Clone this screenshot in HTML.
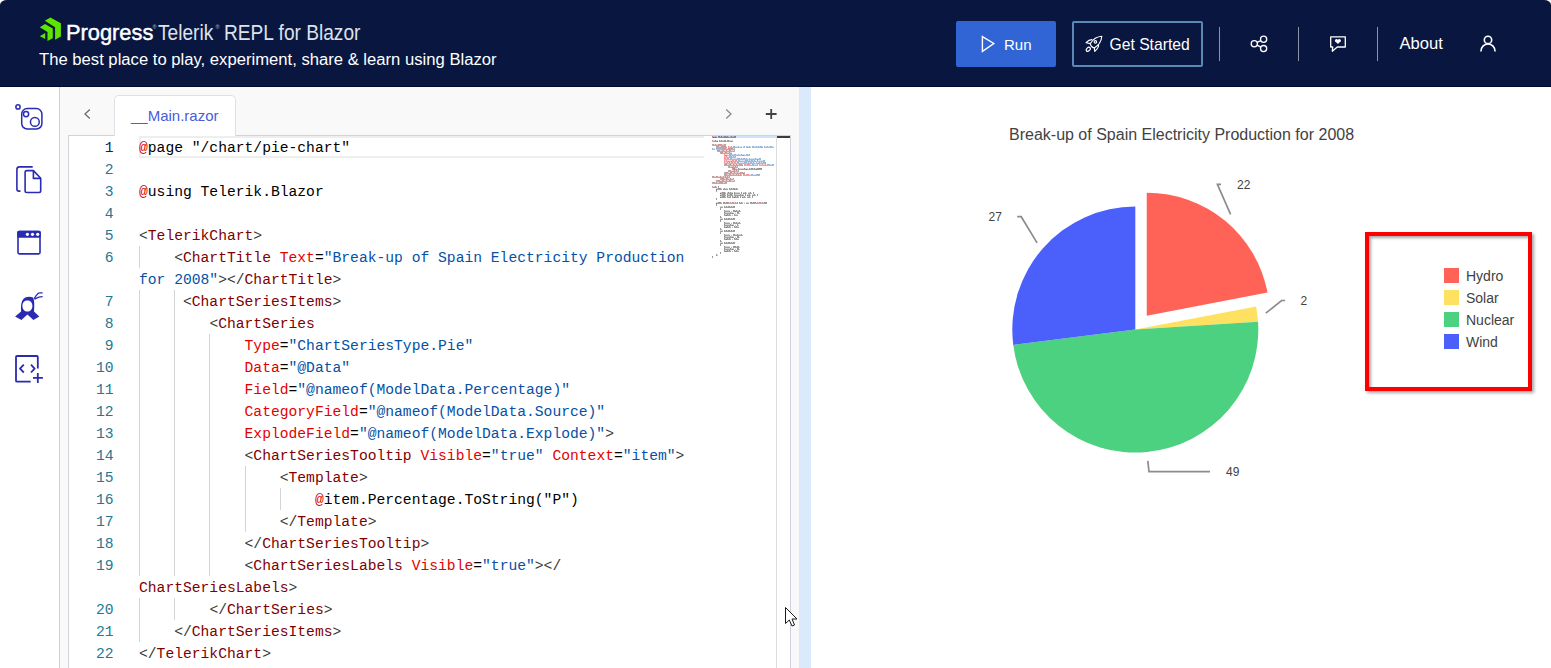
<!DOCTYPE html>
<html><head><meta charset="utf-8">
<style>
*{box-sizing:border-box}
html,body{margin:0;padding:0}
body{width:1551px;height:668px;overflow:hidden;position:relative;background:#fff;font-family:"Liberation Sans",sans-serif}
.abs{position:absolute}
#hdr{position:absolute;left:0;top:0;width:1551px;height:87px;background:#081640;border-radius:7px 7px 0 0 / 5px 5px 0 0;border-bottom:1px solid #000832}
.w{position:absolute;white-space:nowrap;color:#fff;line-height:1}
.btn{position:absolute;top:21px;height:46px;border-radius:2px}
.sep{position:absolute;top:27px;width:1px;height:34px;background:#8b93a6}
#side{position:absolute;left:0;top:87px;width:60px;height:581px;background:#fff;border-right:1px solid #c9d1dc}
#ed{position:absolute;left:60px;top:87px;width:739px;height:581px;background:#f9f9f9}
#split{position:absolute;left:799px;top:87px;width:12px;height:581px;background:#dbe9fc}
#box{position:absolute;left:68px;top:135px;width:723px;height:540px;background:#fff;border:1px solid #cfd4da}
.ln{position:absolute;left:70px;width:43.6px;text-align:right;font-family:"Liberation Mono",monospace;font-size:14.67px;line-height:22px;height:22px;color:#237893;padding-top:1px}
.ln.cur{color:#0b216f}
.cl{position:absolute;left:139px;white-space:pre;font-family:"Liberation Mono",monospace;font-size:14.67px;line-height:22px;height:22px;padding-top:1px}
.a{color:#e00000}.t{color:#800000}.d{color:#383838}.n{color:#e50000}.v{color:#0451a5}.p{color:#000}
.gd{position:absolute;width:1px;height:22px;background:#d3d3d3}
#tab{position:absolute;left:114px;top:95px;width:122px;height:41px;background:#fff;border:1px solid #dee2e6;border-bottom:none;border-radius:5px 5px 0 0}
</style></head><body>

<div id="hdr">
  <!-- Progress logo -->
  <svg class="abs" style="left:36px;top:14px" width="30" height="30" viewBox="0 0 30 30">
    <polygon fill="#5ce500" points="8.8,6.7 14.4,3.4 24.9,9.2 24.9,22.5 19.1,25.8 19.1,13.2"/>
    <polygon fill="#5ce500" points="3.8,13.3 9,10.1 16.8,14.6 16.8,24.2 11.5,26.9 11.5,17.9"/>
    <polygon fill="#5ce500" points="3.8,22.2 9.2,18.9 9.2,24.9"/>
  </svg>
  <div class="w" style="left:65.6px;top:21.6px;font-size:22.5px;-webkit-text-stroke:0.45px #fff;transform:scaleX(0.97);transform-origin:0 0">Progress</div>
  <div class="w" style="left:152.5px;top:25px;font-size:5.5px;color:#b9bfcc">&#174;</div>
  <div class="w" style="left:158px;top:21px;font-size:22.5px;color:#dfe2ea;transform:scaleX(0.85) translateY(1px);transform-origin:0 0">Telerik</div>
  <div class="w" style="left:215.5px;top:25px;font-size:5.5px;color:#b9bfcc">&#174;</div>
  <div class="w" style="left:224px;top:21px;font-size:22.5px;color:#dfe2ea;transform:scaleX(0.85) translateY(1px);transform-origin:0 0">REPL for Blazor</div>
  <div class="w" style="left:39px;top:51.5px;font-size:16.65px;color:#fff">The best place to play, experiment, share &amp; learn using Blazor</div>

  <!-- Run -->
  <div class="btn" style="left:956px;width:100px;background:#3165d6"></div>
  <svg class="abs" style="left:970px;top:25px" width="40" height="40" viewBox="0 0 40 40">
    <path d="M12.4,11.6 L23.8,18.5 L12.4,26.3 Z" fill="none" stroke="#fff" stroke-width="1.4" stroke-linejoin="miter"/>
  </svg>
  <div class="w" style="left:1004px;top:37px;font-size:15px">Run</div>

  <!-- Get started -->
  <div class="btn" style="left:1072px;width:131px;border:2px solid #5a87b6"></div>
  <svg class="abs" style="left:1082px;top:32px" width="24" height="24" viewBox="0 0 24 24" fill="none" stroke="#fff" stroke-width="1.15" stroke-linejoin="round">
    <path d="M19.8,4.3 C14.5,4.6 10.5,8 8.3,11.6 C8.6,13.4 10.4,15.5 12.3,15.9 C15.8,13.8 19.4,10 19.8,4.3 Z"/>
    <circle cx="13.4" cy="9.9" r="1.25"/>
    <path d="M10.4,7.6 C8.3,7.4 6,8.6 4.1,10.7 L8.3,11.6"/>
    <path d="M16.6,12.4 C16.8,14.5 15.6,17 12.8,19.4 L12.3,15.9"/>
    <ellipse cx="6.3" cy="17.3" rx="1.6" ry="2.4" transform="rotate(45 6.3 17.3)"/>
  </svg>
  <div class="w" style="left:1109.5px;top:37px;font-size:15.7px">Get Started</div>

  <div class="sep" style="left:1219px"></div>
  <!-- share -->
  <svg class="abs" style="left:1240px;top:25px" width="40" height="40" viewBox="0 0 40 40">
    <circle cx="14.3" cy="18.8" r="3.1" fill="none" stroke="#fff" stroke-width="1.3"/>
    <circle cx="23.6" cy="14.3" r="3.1" fill="none" stroke="#fff" stroke-width="1.3"/>
    <circle cx="23.6" cy="23.6" r="3.1" fill="none" stroke="#fff" stroke-width="1.3"/>
    <path d="M17,17.4 L20.9,15.6 M17,20.2 L20.9,22.2" stroke="#fff" stroke-width="1.3"/>
  </svg>
  <div class="sep" style="left:1298px"></div>
  <!-- chat -->
  <svg class="abs" style="left:1320px;top:25px" width="40" height="40" viewBox="0 0 40 40">
    <path d="M10.7,11.8 L25.3,11.8 L25.3,22 L17.3,22 L12.3,26.2 L12.7,22 L10.7,22 Z" fill="none" stroke="#fff" stroke-width="1.3" stroke-linejoin="round"/>
    <circle cx="16.5" cy="15.6" r="1.55" fill="#fff"/><circle cx="19.3" cy="15.6" r="1.55" fill="#fff"/><path d="M15,16 L20.8,16 L17.9,19.1 Z" fill="#fff"/>
  </svg>
  <div class="sep" style="left:1377px"></div>
  <div class="w" style="left:1399.5px;top:35.5px;font-size:16.6px">About</div>
  <!-- user -->
  <svg class="abs" style="left:1470px;top:25px" width="40" height="40" viewBox="0 0 40 40">
    <circle cx="18" cy="14.9" r="3.7" fill="none" stroke="#fff" stroke-width="1.6"/>
    <path d="M10.9,26.6 C10.9,22 14,19 18,19 C22,19 25.1,22 25.1,26.6" fill="none" stroke="#fff" stroke-width="1.6"/>
  </svg>
</div>

<div id="side">
  <svg class="abs" style="left:10px;top:11px" width="40" height="40" viewBox="0 0 40 40" fill="none" stroke="#2a2bb3" stroke-width="1.5">
    <circle cx="8" cy="8.9" r="2.1"/>
    <rect x="11.7" y="10.6" width="20.2" height="20.4" rx="5.5"/>
    <circle cx="16.05" cy="16.05" r="2.6"/>
    <circle cx="24.85" cy="23.95" r="4.4"/>
  </svg>
  <svg class="abs" style="left:10px;top:73px" width="40" height="40" viewBox="0 0 40 40" fill="none" stroke="#2a2bb3" stroke-width="1.6" stroke-linejoin="round">
    <path d="M22.7,6.9 L9.5,6.9 Q6.9,6.9 6.9,9.5 L6.9,29 Q6.9,31.1 9,31.1 L10.5,31.1"/>
    <path d="M23.4,10.6 L16.8,10.6 Q15.1,10.6 15.1,12.3 L15.1,30.8 Q15.1,32.5 16.8,32.5 L29,32.5 Q30.7,32.5 30.7,30.8 L30.7,18.2 Z"/>
    <path d="M23.4,10.6 L23.4,18.4 L30.7,18.4"/>
  </svg>
  <svg class="abs" style="left:10px;top:136px" width="40" height="40" viewBox="0 0 40 40">
    <rect x="8" y="8.6" width="22" height="22.3" rx="1.3" fill="none" stroke="#2a2bb3" stroke-width="1.6"/>
    <rect x="7.2" y="7.8" width="23.6" height="6.9" rx="1.5" fill="#2a2bb3"/>
    <circle cx="17.4" cy="11.3" r="1.6" fill="#fff"/>
    <circle cx="22.5" cy="11.3" r="1.6" fill="#fff"/>
    <circle cx="27.7" cy="11.3" r="1.6" fill="#fff"/>
  </svg>
  <svg class="abs" style="left:10px;top:200px" width="40" height="40" viewBox="0 0 40 40">
    <path fill="#2a2bb3" fill-rule="evenodd" d="M11.1,24.5 C10.6,19 11.2,14.5 13.5,11.8 C15.5,9.6 20,9 23,10.5 C24.5,12.5 24.5,19 24,24.5 L29.3,29.4 L23.4,33 L17.4,27.6 L11.4,33 L5.1,29.4 Z M17.4,13.4 C14.7,13.4 12.4,15.2 12.4,18.9 C12.4,22.4 14.7,24.5 17.4,24.5 C20.1,24.5 22.4,22.4 22.4,18.9 C22.4,15.2 20.1,13.4 17.4,13.4 Z"/>
    <path d="M24,11.6 C26.5,9 27,5.8 29.5,5.8 L32.6,5.8 M24.5,12.2 C27.5,10.5 29,9.5 32.6,9.6" fill="none" stroke="#2a2bb3" stroke-width="1.2"/>
  </svg>
  <svg class="abs" style="left:10px;top:263px" width="40" height="40" viewBox="0 0 40 40" fill="none" stroke="#2a2bb3" stroke-width="1.8">
    <path d="M20.7,31.7 L7,31.7 Q6,31.7 6,30.7 L6,7 Q6,6 7,6 L26.8,6 Q27.8,6 27.8,7 L27.8,18.6"/>
    <path d="M13.8,14.7 L10,18.6 L13.8,22.5 M21,14.7 L24.6,18.6 L21,22.5" stroke-linejoin="round"/>
    <path d="M27.8,23 L27.8,32.9 M23,27.8 L32.9,27.8"/>
  </svg>
</div>

<div id="ed"></div>
<div id="box"></div>
<div id="tab"></div>
<div class="w" style="left:131px;top:108px;font-size:15px;color:#4a5cd9">__Main.razor</div>
<svg class="abs" style="left:80px;top:105px" width="16" height="18" viewBox="0 0 16 18"><path d="M9.8,4.6 L5,9 L9.8,13.4" fill="none" stroke="#6c6c6c" stroke-width="1.3"/></svg>
<svg class="abs" style="left:720px;top:105px" width="16" height="18" viewBox="0 0 16 18"><path d="M6.2,4.6 L11,9 L6.2,13.4" fill="none" stroke="#8a8a8a" stroke-width="1.3"/></svg>
<svg class="abs" style="left:762px;top:105px" width="18" height="18" viewBox="0 0 18 18"><path d="M9.2,3.9 L9.2,14 M3.8,9 L14.6,9" fill="none" stroke="#424242" stroke-width="1.8"/></svg>

<!-- current line highlight -->
<div class="abs" style="left:139px;top:136px;width:565px;height:22px;border:2px solid #eeeeee;border-right:none"></div>
<div class="gd" style="left:139px;top:246px"></div><div class="gd" style="left:139px;top:290px"></div><div class="gd" style="left:139px;top:312px"></div><div class="gd" style="left:139px;top:334px"></div><div class="gd" style="left:139px;top:356px"></div><div class="gd" style="left:139px;top:378px"></div><div class="gd" style="left:139px;top:400px"></div><div class="gd" style="left:139px;top:422px"></div><div class="gd" style="left:139px;top:444px"></div><div class="gd" style="left:139px;top:466px"></div><div class="gd" style="left:139px;top:488px"></div><div class="gd" style="left:139px;top:510px"></div><div class="gd" style="left:139px;top:532px"></div><div class="gd" style="left:139px;top:554px"></div><div class="gd" style="left:139px;top:598px"></div><div class="gd" style="left:139px;top:620px"></div><div class="gd" style="left:174px;top:290px"></div><div class="gd" style="left:174px;top:312px"></div><div class="gd" style="left:174px;top:334px"></div><div class="gd" style="left:174px;top:356px"></div><div class="gd" style="left:174px;top:378px"></div><div class="gd" style="left:174px;top:400px"></div><div class="gd" style="left:174px;top:422px"></div><div class="gd" style="left:174px;top:444px"></div><div class="gd" style="left:174px;top:466px"></div><div class="gd" style="left:174px;top:488px"></div><div class="gd" style="left:174px;top:510px"></div><div class="gd" style="left:174px;top:532px"></div><div class="gd" style="left:174px;top:554px"></div><div class="gd" style="left:174px;top:598px"></div><div class="gd" style="left:209px;top:334px"></div><div class="gd" style="left:209px;top:356px"></div><div class="gd" style="left:209px;top:378px"></div><div class="gd" style="left:209px;top:400px"></div><div class="gd" style="left:209px;top:422px"></div><div class="gd" style="left:209px;top:444px"></div><div class="gd" style="left:209px;top:466px"></div><div class="gd" style="left:209px;top:488px"></div><div class="gd" style="left:209px;top:510px"></div><div class="gd" style="left:209px;top:532px"></div><div class="gd" style="left:209px;top:554px"></div><div class="gd" style="left:245px;top:466px"></div><div class="gd" style="left:245px;top:488px"></div><div class="gd" style="left:245px;top:510px"></div><div class="gd" style="left:280px;top:488px"></div>
<div class="ln cur" style="top:136px">1</div>
<div class="cl" style="top:136px"><span class="a">@</span><span class="p">page &quot;/chart/pie-chart&quot;</span></div>
<div class="ln" style="top:158px">2</div>
<div class="cl" style="top:158px"></div>
<div class="ln" style="top:180px">3</div>
<div class="cl" style="top:180px"><span class="a">@</span><span class="p">using Telerik.Blazor</span></div>
<div class="ln" style="top:202px">4</div>
<div class="cl" style="top:202px"></div>
<div class="ln" style="top:224px">5</div>
<div class="cl" style="top:224px"><span class="d">&lt;</span><span class="t">TelerikChart</span><span class="d">&gt;</span></div>
<div class="ln" style="top:246px">6</div>
<div class="cl" style="top:246px"><span class="p">    </span><span class="d">&lt;</span><span class="t">ChartTitle</span><span class="p"> </span><span class="n">Text</span><span class="p">=</span><span class="v">&quot;Break-up of Spain Electricity Production</span></div>
<div class="cl" style="top:268px"><span class="v">for 2008&quot;</span><span class="d">&gt;&lt;/</span><span class="t">ChartTitle</span><span class="d">&gt;</span></div>
<div class="ln" style="top:290px">7</div>
<div class="cl" style="top:290px"><span class="p">     </span><span class="d">&lt;</span><span class="t">ChartSeriesItems</span><span class="d">&gt;</span></div>
<div class="ln" style="top:312px">8</div>
<div class="cl" style="top:312px"><span class="p">        </span><span class="d">&lt;</span><span class="t">ChartSeries</span></div>
<div class="ln" style="top:334px">9</div>
<div class="cl" style="top:334px"><span class="p">            </span><span class="n">Type</span><span class="p">=</span><span class="v">&quot;ChartSeriesType.Pie&quot;</span></div>
<div class="ln" style="top:356px">10</div>
<div class="cl" style="top:356px"><span class="p">            </span><span class="n">Data</span><span class="p">=</span><span class="v">&quot;@Data&quot;</span></div>
<div class="ln" style="top:378px">11</div>
<div class="cl" style="top:378px"><span class="p">            </span><span class="n">Field</span><span class="p">=</span><span class="v">&quot;@nameof(ModelData.Percentage)&quot;</span></div>
<div class="ln" style="top:400px">12</div>
<div class="cl" style="top:400px"><span class="p">            </span><span class="n">CategoryField</span><span class="p">=</span><span class="v">&quot;@nameof(ModelData.Source)&quot;</span></div>
<div class="ln" style="top:422px">13</div>
<div class="cl" style="top:422px"><span class="p">            </span><span class="n">ExplodeField</span><span class="p">=</span><span class="v">&quot;@nameof(ModelData.Explode)&quot;</span><span class="d">&gt;</span></div>
<div class="ln" style="top:444px">14</div>
<div class="cl" style="top:444px"><span class="p">            </span><span class="d">&lt;</span><span class="t">ChartSeriesTooltip</span><span class="p"> </span><span class="n">Visible</span><span class="p">=</span><span class="v">&quot;true&quot;</span><span class="p"> </span><span class="n">Context</span><span class="p">=</span><span class="v">&quot;item&quot;</span><span class="d">&gt;</span></div>
<div class="ln" style="top:466px">15</div>
<div class="cl" style="top:466px"><span class="p">                </span><span class="d">&lt;</span><span class="t">Template</span><span class="d">&gt;</span></div>
<div class="ln" style="top:488px">16</div>
<div class="cl" style="top:488px"><span class="p">                    </span><span class="a">@</span><span class="p">item.Percentage.ToString(&quot;P&quot;)</span></div>
<div class="ln" style="top:510px">17</div>
<div class="cl" style="top:510px"><span class="p">                </span><span class="d">&lt;/</span><span class="t">Template</span><span class="d">&gt;</span></div>
<div class="ln" style="top:532px">18</div>
<div class="cl" style="top:532px"><span class="p">            </span><span class="d">&lt;/</span><span class="t">ChartSeriesTooltip</span><span class="d">&gt;</span></div>
<div class="ln" style="top:554px">19</div>
<div class="cl" style="top:554px"><span class="p">            </span><span class="d">&lt;</span><span class="t">ChartSeriesLabels</span><span class="p"> </span><span class="n">Visible</span><span class="p">=</span><span class="v">&quot;true&quot;</span><span class="d">&gt;&lt;/</span></div>
<div class="cl" style="top:576px"><span class="t">ChartSeriesLabels</span><span class="d">&gt;</span></div>
<div class="ln" style="top:598px">20</div>
<div class="cl" style="top:598px"><span class="p">        </span><span class="d">&lt;/</span><span class="t">ChartSeries</span><span class="d">&gt;</span></div>
<div class="ln" style="top:620px">21</div>
<div class="cl" style="top:620px"><span class="p">    </span><span class="d">&lt;/</span><span class="t">ChartSeriesItems</span><span class="d">&gt;</span></div>
<div class="ln" style="top:642px">22</div>
<div class="cl" style="top:642px"><span class="d">&lt;/</span><span class="t">TelerikChart</span><span class="d">&gt;</span></div>
<!-- minimap -->
<div class="abs" style="left:712px;top:136px;width:65px;height:2px;background:#cfe3fb"></div>
<svg class="abs" style="left:0;top:0" width="1551" height="668" opacity="0.65"><rect x="712.1" y="136.2" width="0.8" height="1.5" fill="#e00000"/><rect x="713.1" y="136.7" width="0.8" height="1.3" fill="#000000"/><rect x="714.1" y="136.7" width="0.8" height="1.0" fill="#000000"/><rect x="715.1" y="136.7" width="0.8" height="1.3" fill="#000000"/><rect x="716.1" y="136.7" width="0.8" height="1.0" fill="#000000"/><rect x="718.1" y="136.2" width="0.8" height="1.5" fill="#000000"/><rect x="719.1" y="136.2" width="0.8" height="1.5" fill="#000000"/><rect x="720.1" y="136.7" width="0.8" height="1.0" fill="#000000"/><rect x="721.1" y="136.2" width="0.8" height="1.5" fill="#000000"/><rect x="722.1" y="136.7" width="0.8" height="1.0" fill="#000000"/><rect x="723.1" y="136.7" width="0.8" height="1.0" fill="#000000"/><rect x="724.1" y="136.2" width="0.8" height="1.5" fill="#000000"/><rect x="725.1" y="136.2" width="0.8" height="1.5" fill="#000000"/><rect x="726.1" y="136.7" width="0.8" height="1.3" fill="#000000"/><rect x="727.1" y="136.2" width="0.8" height="1.5" fill="#000000"/><rect x="728.1" y="136.7" width="0.8" height="1.0" fill="#000000"/><rect x="729.1" y="136.9" width="0.8" height="0.6" fill="#000000"/><rect x="730.1" y="136.7" width="0.8" height="1.0" fill="#000000"/><rect x="731.1" y="136.2" width="0.8" height="1.5" fill="#000000"/><rect x="732.1" y="136.7" width="0.8" height="1.0" fill="#000000"/><rect x="733.1" y="136.7" width="0.8" height="1.0" fill="#000000"/><rect x="734.1" y="136.2" width="0.8" height="1.5" fill="#000000"/><rect x="735.1" y="136.2" width="0.8" height="1.5" fill="#000000"/><rect x="712.1" y="140.2" width="0.8" height="1.5" fill="#e00000"/><rect x="713.1" y="140.7" width="0.8" height="1.0" fill="#000000"/><rect x="714.1" y="140.7" width="0.8" height="1.0" fill="#000000"/><rect x="715.1" y="140.2" width="0.8" height="1.5" fill="#000000"/><rect x="716.1" y="140.7" width="0.8" height="1.0" fill="#000000"/><rect x="717.1" y="140.7" width="0.8" height="1.3" fill="#000000"/><rect x="719.1" y="140.2" width="0.8" height="1.5" fill="#000000"/><rect x="720.1" y="140.7" width="0.8" height="1.0" fill="#000000"/><rect x="721.1" y="140.2" width="0.8" height="1.5" fill="#000000"/><rect x="722.1" y="140.7" width="0.8" height="1.0" fill="#000000"/><rect x="723.1" y="140.7" width="0.8" height="1.0" fill="#000000"/><rect x="724.1" y="140.2" width="0.8" height="1.5" fill="#000000"/><rect x="725.1" y="140.2" width="0.8" height="1.5" fill="#000000"/><rect x="726.1" y="141.3" width="0.8" height="0.5" fill="#000000"/><rect x="727.1" y="140.2" width="0.8" height="1.5" fill="#000000"/><rect x="728.1" y="140.2" width="0.8" height="1.5" fill="#000000"/><rect x="729.1" y="140.7" width="0.8" height="1.0" fill="#000000"/><rect x="730.1" y="140.7" width="0.8" height="1.0" fill="#000000"/><rect x="731.1" y="140.7" width="0.8" height="1.0" fill="#000000"/><rect x="732.1" y="140.7" width="0.8" height="1.0" fill="#000000"/><rect x="712.1" y="144.2" width="0.8" height="1.5" fill="#383838"/><rect x="713.1" y="144.2" width="0.8" height="1.5" fill="#800000"/><rect x="714.1" y="144.7" width="0.8" height="1.0" fill="#800000"/><rect x="715.1" y="144.2" width="0.8" height="1.5" fill="#800000"/><rect x="716.1" y="144.7" width="0.8" height="1.0" fill="#800000"/><rect x="717.1" y="144.7" width="0.8" height="1.0" fill="#800000"/><rect x="718.1" y="144.2" width="0.8" height="1.5" fill="#800000"/><rect x="719.1" y="144.2" width="0.8" height="1.5" fill="#800000"/><rect x="720.1" y="144.2" width="0.8" height="1.5" fill="#800000"/><rect x="721.1" y="144.2" width="0.8" height="1.5" fill="#800000"/><rect x="722.1" y="144.7" width="0.8" height="1.0" fill="#800000"/><rect x="723.1" y="144.7" width="0.8" height="1.0" fill="#800000"/><rect x="724.1" y="144.2" width="0.8" height="1.5" fill="#800000"/><rect x="725.1" y="144.2" width="0.8" height="1.5" fill="#383838"/><rect x="716.1" y="146.2" width="0.8" height="1.5" fill="#383838"/><rect x="717.1" y="146.2" width="0.8" height="1.5" fill="#800000"/><rect x="718.1" y="146.2" width="0.8" height="1.5" fill="#800000"/><rect x="719.1" y="146.7" width="0.8" height="1.0" fill="#800000"/><rect x="720.1" y="146.7" width="0.8" height="1.0" fill="#800000"/><rect x="721.1" y="146.2" width="0.8" height="1.5" fill="#800000"/><rect x="722.1" y="146.2" width="0.8" height="1.5" fill="#800000"/><rect x="723.1" y="146.2" width="0.8" height="1.5" fill="#800000"/><rect x="724.1" y="146.2" width="0.8" height="1.5" fill="#800000"/><rect x="725.1" y="146.2" width="0.8" height="1.5" fill="#800000"/><rect x="726.1" y="146.7" width="0.8" height="1.0" fill="#800000"/><rect x="728.1" y="146.2" width="0.8" height="1.5" fill="#e50000"/><rect x="729.1" y="146.7" width="0.8" height="1.0" fill="#e50000"/><rect x="730.1" y="146.7" width="0.8" height="1.0" fill="#e50000"/><rect x="731.1" y="146.2" width="0.8" height="1.5" fill="#e50000"/><rect x="732.1" y="146.9" width="0.8" height="0.6" fill="#000000"/><rect x="733.1" y="146.2" width="0.8" height="1.5" fill="#0451a5"/><rect x="734.1" y="146.2" width="0.8" height="1.5" fill="#0451a5"/><rect x="735.1" y="146.7" width="0.8" height="1.0" fill="#0451a5"/><rect x="736.1" y="146.7" width="0.8" height="1.0" fill="#0451a5"/><rect x="737.1" y="146.7" width="0.8" height="1.0" fill="#0451a5"/><rect x="738.1" y="146.2" width="0.8" height="1.5" fill="#0451a5"/><rect x="739.1" y="146.9" width="0.8" height="0.6" fill="#0451a5"/><rect x="740.1" y="146.7" width="0.8" height="1.0" fill="#0451a5"/><rect x="741.1" y="146.7" width="0.8" height="1.3" fill="#0451a5"/><rect x="743.1" y="146.7" width="0.8" height="1.0" fill="#0451a5"/><rect x="744.1" y="146.2" width="0.8" height="1.5" fill="#0451a5"/><rect x="746.1" y="146.2" width="0.8" height="1.5" fill="#0451a5"/><rect x="747.1" y="146.7" width="0.8" height="1.3" fill="#0451a5"/><rect x="748.1" y="146.7" width="0.8" height="1.0" fill="#0451a5"/><rect x="749.1" y="146.2" width="0.8" height="1.5" fill="#0451a5"/><rect x="750.1" y="146.7" width="0.8" height="1.0" fill="#0451a5"/><rect x="752.1" y="146.2" width="0.8" height="1.5" fill="#0451a5"/><rect x="753.1" y="146.2" width="0.8" height="1.5" fill="#0451a5"/><rect x="754.1" y="146.7" width="0.8" height="1.0" fill="#0451a5"/><rect x="755.1" y="146.7" width="0.8" height="1.0" fill="#0451a5"/><rect x="756.1" y="146.2" width="0.8" height="1.5" fill="#0451a5"/><rect x="757.1" y="146.7" width="0.8" height="1.0" fill="#0451a5"/><rect x="758.1" y="146.2" width="0.8" height="1.5" fill="#0451a5"/><rect x="759.1" y="146.7" width="0.8" height="1.0" fill="#0451a5"/><rect x="760.1" y="146.2" width="0.8" height="1.5" fill="#0451a5"/><rect x="761.1" y="146.2" width="0.8" height="1.5" fill="#0451a5"/><rect x="762.1" y="146.7" width="0.8" height="1.3" fill="#0451a5"/><rect x="764.1" y="146.2" width="0.8" height="1.5" fill="#0451a5"/><rect x="765.1" y="146.7" width="0.8" height="1.0" fill="#0451a5"/><rect x="766.1" y="146.7" width="0.8" height="1.0" fill="#0451a5"/><rect x="767.1" y="146.2" width="0.8" height="1.5" fill="#0451a5"/><rect x="768.1" y="146.7" width="0.8" height="1.0" fill="#0451a5"/><rect x="769.1" y="146.7" width="0.8" height="1.0" fill="#0451a5"/><rect x="770.1" y="146.2" width="0.8" height="1.5" fill="#0451a5"/><rect x="771.1" y="146.2" width="0.8" height="1.5" fill="#0451a5"/><rect x="772.1" y="146.7" width="0.8" height="1.0" fill="#0451a5"/><rect x="773.1" y="146.7" width="0.8" height="1.0" fill="#0451a5"/><rect x="712.1" y="148.2" width="0.8" height="1.5" fill="#0451a5"/><rect x="713.1" y="148.7" width="0.8" height="1.0" fill="#0451a5"/><rect x="714.1" y="148.7" width="0.8" height="1.0" fill="#0451a5"/><rect x="716.1" y="148.2" width="0.8" height="1.5" fill="#0451a5"/><rect x="717.1" y="148.2" width="0.8" height="1.5" fill="#0451a5"/><rect x="718.1" y="148.2" width="0.8" height="1.5" fill="#0451a5"/><rect x="719.1" y="148.2" width="0.8" height="1.5" fill="#0451a5"/><rect x="720.1" y="148.2" width="0.8" height="1.5" fill="#0451a5"/><rect x="721.1" y="148.2" width="0.8" height="1.5" fill="#383838"/><rect x="722.1" y="148.2" width="0.8" height="1.5" fill="#383838"/><rect x="723.1" y="148.2" width="0.8" height="1.5" fill="#383838"/><rect x="724.1" y="148.2" width="0.8" height="1.5" fill="#800000"/><rect x="725.1" y="148.2" width="0.8" height="1.5" fill="#800000"/><rect x="726.1" y="148.7" width="0.8" height="1.0" fill="#800000"/><rect x="727.1" y="148.7" width="0.8" height="1.0" fill="#800000"/><rect x="728.1" y="148.2" width="0.8" height="1.5" fill="#800000"/><rect x="729.1" y="148.2" width="0.8" height="1.5" fill="#800000"/><rect x="730.1" y="148.2" width="0.8" height="1.5" fill="#800000"/><rect x="731.1" y="148.2" width="0.8" height="1.5" fill="#800000"/><rect x="732.1" y="148.2" width="0.8" height="1.5" fill="#800000"/><rect x="733.1" y="148.7" width="0.8" height="1.0" fill="#800000"/><rect x="734.1" y="148.2" width="0.8" height="1.5" fill="#383838"/><rect x="717.1" y="150.2" width="0.8" height="1.5" fill="#383838"/><rect x="718.1" y="150.2" width="0.8" height="1.5" fill="#800000"/><rect x="719.1" y="150.2" width="0.8" height="1.5" fill="#800000"/><rect x="720.1" y="150.7" width="0.8" height="1.0" fill="#800000"/><rect x="721.1" y="150.7" width="0.8" height="1.0" fill="#800000"/><rect x="722.1" y="150.2" width="0.8" height="1.5" fill="#800000"/><rect x="723.1" y="150.2" width="0.8" height="1.5" fill="#800000"/><rect x="724.1" y="150.7" width="0.8" height="1.0" fill="#800000"/><rect x="725.1" y="150.7" width="0.8" height="1.0" fill="#800000"/><rect x="726.1" y="150.2" width="0.8" height="1.5" fill="#800000"/><rect x="727.1" y="150.7" width="0.8" height="1.0" fill="#800000"/><rect x="728.1" y="150.7" width="0.8" height="1.0" fill="#800000"/><rect x="729.1" y="150.2" width="0.8" height="1.5" fill="#800000"/><rect x="730.1" y="150.2" width="0.8" height="1.5" fill="#800000"/><rect x="731.1" y="150.7" width="0.8" height="1.0" fill="#800000"/><rect x="732.1" y="150.7" width="0.8" height="1.0" fill="#800000"/><rect x="733.1" y="150.7" width="0.8" height="1.0" fill="#800000"/><rect x="734.1" y="150.2" width="0.8" height="1.5" fill="#383838"/><rect x="720.1" y="152.2" width="0.8" height="1.5" fill="#383838"/><rect x="721.1" y="152.2" width="0.8" height="1.5" fill="#800000"/><rect x="722.1" y="152.2" width="0.8" height="1.5" fill="#800000"/><rect x="723.1" y="152.7" width="0.8" height="1.0" fill="#800000"/><rect x="724.1" y="152.7" width="0.8" height="1.0" fill="#800000"/><rect x="725.1" y="152.2" width="0.8" height="1.5" fill="#800000"/><rect x="726.1" y="152.2" width="0.8" height="1.5" fill="#800000"/><rect x="727.1" y="152.7" width="0.8" height="1.0" fill="#800000"/><rect x="728.1" y="152.7" width="0.8" height="1.0" fill="#800000"/><rect x="729.1" y="152.2" width="0.8" height="1.5" fill="#800000"/><rect x="730.1" y="152.7" width="0.8" height="1.0" fill="#800000"/><rect x="731.1" y="152.7" width="0.8" height="1.0" fill="#800000"/><rect x="724.1" y="154.2" width="0.8" height="1.5" fill="#e50000"/><rect x="725.1" y="154.7" width="0.8" height="1.3" fill="#e50000"/><rect x="726.1" y="154.7" width="0.8" height="1.3" fill="#e50000"/><rect x="727.1" y="154.7" width="0.8" height="1.0" fill="#e50000"/><rect x="728.1" y="154.9" width="0.8" height="0.6" fill="#000000"/><rect x="729.1" y="154.2" width="0.8" height="1.5" fill="#0451a5"/><rect x="730.1" y="154.2" width="0.8" height="1.5" fill="#0451a5"/><rect x="731.1" y="154.2" width="0.8" height="1.5" fill="#0451a5"/><rect x="732.1" y="154.7" width="0.8" height="1.0" fill="#0451a5"/><rect x="733.1" y="154.7" width="0.8" height="1.0" fill="#0451a5"/><rect x="734.1" y="154.2" width="0.8" height="1.5" fill="#0451a5"/><rect x="735.1" y="154.2" width="0.8" height="1.5" fill="#0451a5"/><rect x="736.1" y="154.7" width="0.8" height="1.0" fill="#0451a5"/><rect x="737.1" y="154.7" width="0.8" height="1.0" fill="#0451a5"/><rect x="738.1" y="154.2" width="0.8" height="1.5" fill="#0451a5"/><rect x="739.1" y="154.7" width="0.8" height="1.0" fill="#0451a5"/><rect x="740.1" y="154.7" width="0.8" height="1.0" fill="#0451a5"/><rect x="741.1" y="154.2" width="0.8" height="1.5" fill="#0451a5"/><rect x="742.1" y="154.7" width="0.8" height="1.3" fill="#0451a5"/><rect x="743.1" y="154.7" width="0.8" height="1.3" fill="#0451a5"/><rect x="744.1" y="154.7" width="0.8" height="1.0" fill="#0451a5"/><rect x="745.1" y="155.3" width="0.8" height="0.5" fill="#0451a5"/><rect x="746.1" y="154.2" width="0.8" height="1.5" fill="#0451a5"/><rect x="747.1" y="154.2" width="0.8" height="1.5" fill="#0451a5"/><rect x="748.1" y="154.7" width="0.8" height="1.0" fill="#0451a5"/><rect x="749.1" y="154.2" width="0.8" height="1.5" fill="#0451a5"/><rect x="724.1" y="156.2" width="0.8" height="1.5" fill="#e50000"/><rect x="725.1" y="156.7" width="0.8" height="1.0" fill="#e50000"/><rect x="726.1" y="156.2" width="0.8" height="1.5" fill="#e50000"/><rect x="727.1" y="156.7" width="0.8" height="1.0" fill="#e50000"/><rect x="728.1" y="156.9" width="0.8" height="0.6" fill="#000000"/><rect x="729.1" y="156.2" width="0.8" height="1.5" fill="#0451a5"/><rect x="730.1" y="156.2" width="0.8" height="1.5" fill="#0451a5"/><rect x="731.1" y="156.2" width="0.8" height="1.5" fill="#0451a5"/><rect x="732.1" y="156.7" width="0.8" height="1.0" fill="#0451a5"/><rect x="733.1" y="156.2" width="0.8" height="1.5" fill="#0451a5"/><rect x="734.1" y="156.7" width="0.8" height="1.0" fill="#0451a5"/><rect x="735.1" y="156.2" width="0.8" height="1.5" fill="#0451a5"/><rect x="724.1" y="158.2" width="0.8" height="1.5" fill="#e50000"/><rect x="725.1" y="158.2" width="0.8" height="1.5" fill="#e50000"/><rect x="726.1" y="158.7" width="0.8" height="1.0" fill="#e50000"/><rect x="727.1" y="158.2" width="0.8" height="1.5" fill="#e50000"/><rect x="728.1" y="158.2" width="0.8" height="1.5" fill="#e50000"/><rect x="729.1" y="158.9" width="0.8" height="0.6" fill="#000000"/><rect x="730.1" y="158.2" width="0.8" height="1.5" fill="#0451a5"/><rect x="731.1" y="158.2" width="0.8" height="1.5" fill="#0451a5"/><rect x="732.1" y="158.7" width="0.8" height="1.0" fill="#0451a5"/><rect x="733.1" y="158.7" width="0.8" height="1.0" fill="#0451a5"/><rect x="734.1" y="158.7" width="0.8" height="1.0" fill="#0451a5"/><rect x="735.1" y="158.7" width="0.8" height="1.0" fill="#0451a5"/><rect x="736.1" y="158.7" width="0.8" height="1.0" fill="#0451a5"/><rect x="737.1" y="158.2" width="0.8" height="1.5" fill="#0451a5"/><rect x="738.1" y="158.2" width="0.8" height="1.5" fill="#0451a5"/><rect x="739.1" y="158.2" width="0.8" height="1.5" fill="#0451a5"/><rect x="740.1" y="158.7" width="0.8" height="1.0" fill="#0451a5"/><rect x="741.1" y="158.2" width="0.8" height="1.5" fill="#0451a5"/><rect x="742.1" y="158.7" width="0.8" height="1.0" fill="#0451a5"/><rect x="743.1" y="158.2" width="0.8" height="1.5" fill="#0451a5"/><rect x="744.1" y="158.2" width="0.8" height="1.5" fill="#0451a5"/><rect x="745.1" y="158.7" width="0.8" height="1.0" fill="#0451a5"/><rect x="746.1" y="158.2" width="0.8" height="1.5" fill="#0451a5"/><rect x="747.1" y="158.7" width="0.8" height="1.0" fill="#0451a5"/><rect x="748.1" y="159.3" width="0.8" height="0.5" fill="#0451a5"/><rect x="749.1" y="158.2" width="0.8" height="1.5" fill="#0451a5"/><rect x="750.1" y="158.7" width="0.8" height="1.0" fill="#0451a5"/><rect x="751.1" y="158.7" width="0.8" height="1.0" fill="#0451a5"/><rect x="752.1" y="158.7" width="0.8" height="1.0" fill="#0451a5"/><rect x="753.1" y="158.7" width="0.8" height="1.0" fill="#0451a5"/><rect x="754.1" y="158.7" width="0.8" height="1.0" fill="#0451a5"/><rect x="755.1" y="158.2" width="0.8" height="1.5" fill="#0451a5"/><rect x="756.1" y="158.7" width="0.8" height="1.0" fill="#0451a5"/><rect x="757.1" y="158.7" width="0.8" height="1.3" fill="#0451a5"/><rect x="758.1" y="158.7" width="0.8" height="1.0" fill="#0451a5"/><rect x="759.1" y="158.2" width="0.8" height="1.5" fill="#0451a5"/><rect x="760.1" y="158.2" width="0.8" height="1.5" fill="#0451a5"/><rect x="724.1" y="160.2" width="0.8" height="1.5" fill="#e50000"/><rect x="725.1" y="160.7" width="0.8" height="1.0" fill="#e50000"/><rect x="726.1" y="160.2" width="0.8" height="1.5" fill="#e50000"/><rect x="727.1" y="160.7" width="0.8" height="1.0" fill="#e50000"/><rect x="728.1" y="160.7" width="0.8" height="1.3" fill="#e50000"/><rect x="729.1" y="160.7" width="0.8" height="1.0" fill="#e50000"/><rect x="730.1" y="160.7" width="0.8" height="1.0" fill="#e50000"/><rect x="731.1" y="160.7" width="0.8" height="1.3" fill="#e50000"/><rect x="732.1" y="160.2" width="0.8" height="1.5" fill="#e50000"/><rect x="733.1" y="160.2" width="0.8" height="1.5" fill="#e50000"/><rect x="734.1" y="160.7" width="0.8" height="1.0" fill="#e50000"/><rect x="735.1" y="160.2" width="0.8" height="1.5" fill="#e50000"/><rect x="736.1" y="160.2" width="0.8" height="1.5" fill="#e50000"/><rect x="737.1" y="160.9" width="0.8" height="0.6" fill="#000000"/><rect x="738.1" y="160.2" width="0.8" height="1.5" fill="#0451a5"/><rect x="739.1" y="160.2" width="0.8" height="1.5" fill="#0451a5"/><rect x="740.1" y="160.7" width="0.8" height="1.0" fill="#0451a5"/><rect x="741.1" y="160.7" width="0.8" height="1.0" fill="#0451a5"/><rect x="742.1" y="160.7" width="0.8" height="1.0" fill="#0451a5"/><rect x="743.1" y="160.7" width="0.8" height="1.0" fill="#0451a5"/><rect x="744.1" y="160.7" width="0.8" height="1.0" fill="#0451a5"/><rect x="745.1" y="160.2" width="0.8" height="1.5" fill="#0451a5"/><rect x="746.1" y="160.2" width="0.8" height="1.5" fill="#0451a5"/><rect x="747.1" y="160.2" width="0.8" height="1.5" fill="#0451a5"/><rect x="748.1" y="160.7" width="0.8" height="1.0" fill="#0451a5"/><rect x="749.1" y="160.2" width="0.8" height="1.5" fill="#0451a5"/><rect x="750.1" y="160.7" width="0.8" height="1.0" fill="#0451a5"/><rect x="751.1" y="160.2" width="0.8" height="1.5" fill="#0451a5"/><rect x="752.1" y="160.2" width="0.8" height="1.5" fill="#0451a5"/><rect x="753.1" y="160.7" width="0.8" height="1.0" fill="#0451a5"/><rect x="754.1" y="160.2" width="0.8" height="1.5" fill="#0451a5"/><rect x="755.1" y="160.7" width="0.8" height="1.0" fill="#0451a5"/><rect x="756.1" y="161.3" width="0.8" height="0.5" fill="#0451a5"/><rect x="757.1" y="160.2" width="0.8" height="1.5" fill="#0451a5"/><rect x="758.1" y="160.7" width="0.8" height="1.0" fill="#0451a5"/><rect x="759.1" y="160.7" width="0.8" height="1.0" fill="#0451a5"/><rect x="760.1" y="160.7" width="0.8" height="1.0" fill="#0451a5"/><rect x="761.1" y="160.7" width="0.8" height="1.0" fill="#0451a5"/><rect x="762.1" y="160.7" width="0.8" height="1.0" fill="#0451a5"/><rect x="763.1" y="160.2" width="0.8" height="1.5" fill="#0451a5"/><rect x="764.1" y="160.2" width="0.8" height="1.5" fill="#0451a5"/><rect x="724.1" y="162.2" width="0.8" height="1.5" fill="#e50000"/><rect x="725.1" y="162.7" width="0.8" height="1.0" fill="#e50000"/><rect x="726.1" y="162.7" width="0.8" height="1.3" fill="#e50000"/><rect x="727.1" y="162.2" width="0.8" height="1.5" fill="#e50000"/><rect x="728.1" y="162.7" width="0.8" height="1.0" fill="#e50000"/><rect x="729.1" y="162.2" width="0.8" height="1.5" fill="#e50000"/><rect x="730.1" y="162.7" width="0.8" height="1.0" fill="#e50000"/><rect x="731.1" y="162.2" width="0.8" height="1.5" fill="#e50000"/><rect x="732.1" y="162.2" width="0.8" height="1.5" fill="#e50000"/><rect x="733.1" y="162.7" width="0.8" height="1.0" fill="#e50000"/><rect x="734.1" y="162.2" width="0.8" height="1.5" fill="#e50000"/><rect x="735.1" y="162.2" width="0.8" height="1.5" fill="#e50000"/><rect x="736.1" y="162.9" width="0.8" height="0.6" fill="#000000"/><rect x="737.1" y="162.2" width="0.8" height="1.5" fill="#0451a5"/><rect x="738.1" y="162.2" width="0.8" height="1.5" fill="#0451a5"/><rect x="739.1" y="162.7" width="0.8" height="1.0" fill="#0451a5"/><rect x="740.1" y="162.7" width="0.8" height="1.0" fill="#0451a5"/><rect x="741.1" y="162.7" width="0.8" height="1.0" fill="#0451a5"/><rect x="742.1" y="162.7" width="0.8" height="1.0" fill="#0451a5"/><rect x="743.1" y="162.7" width="0.8" height="1.0" fill="#0451a5"/><rect x="744.1" y="162.2" width="0.8" height="1.5" fill="#0451a5"/><rect x="745.1" y="162.2" width="0.8" height="1.5" fill="#0451a5"/><rect x="746.1" y="162.2" width="0.8" height="1.5" fill="#0451a5"/><rect x="747.1" y="162.7" width="0.8" height="1.0" fill="#0451a5"/><rect x="748.1" y="162.2" width="0.8" height="1.5" fill="#0451a5"/><rect x="749.1" y="162.7" width="0.8" height="1.0" fill="#0451a5"/><rect x="750.1" y="162.2" width="0.8" height="1.5" fill="#0451a5"/><rect x="751.1" y="162.2" width="0.8" height="1.5" fill="#0451a5"/><rect x="752.1" y="162.7" width="0.8" height="1.0" fill="#0451a5"/><rect x="753.1" y="162.2" width="0.8" height="1.5" fill="#0451a5"/><rect x="754.1" y="162.7" width="0.8" height="1.0" fill="#0451a5"/><rect x="755.1" y="163.3" width="0.8" height="0.5" fill="#0451a5"/><rect x="756.1" y="162.2" width="0.8" height="1.5" fill="#0451a5"/><rect x="757.1" y="162.7" width="0.8" height="1.0" fill="#0451a5"/><rect x="758.1" y="162.7" width="0.8" height="1.3" fill="#0451a5"/><rect x="759.1" y="162.2" width="0.8" height="1.5" fill="#0451a5"/><rect x="760.1" y="162.7" width="0.8" height="1.0" fill="#0451a5"/><rect x="761.1" y="162.2" width="0.8" height="1.5" fill="#0451a5"/><rect x="762.1" y="162.7" width="0.8" height="1.0" fill="#0451a5"/><rect x="763.1" y="162.2" width="0.8" height="1.5" fill="#0451a5"/><rect x="764.1" y="162.2" width="0.8" height="1.5" fill="#0451a5"/><rect x="765.1" y="162.2" width="0.8" height="1.5" fill="#383838"/><rect x="724.1" y="164.2" width="0.8" height="1.5" fill="#383838"/><rect x="725.1" y="164.2" width="0.8" height="1.5" fill="#800000"/><rect x="726.1" y="164.2" width="0.8" height="1.5" fill="#800000"/><rect x="727.1" y="164.7" width="0.8" height="1.0" fill="#800000"/><rect x="728.1" y="164.7" width="0.8" height="1.0" fill="#800000"/><rect x="729.1" y="164.2" width="0.8" height="1.5" fill="#800000"/><rect x="730.1" y="164.2" width="0.8" height="1.5" fill="#800000"/><rect x="731.1" y="164.7" width="0.8" height="1.0" fill="#800000"/><rect x="732.1" y="164.7" width="0.8" height="1.0" fill="#800000"/><rect x="733.1" y="164.2" width="0.8" height="1.5" fill="#800000"/><rect x="734.1" y="164.7" width="0.8" height="1.0" fill="#800000"/><rect x="735.1" y="164.7" width="0.8" height="1.0" fill="#800000"/><rect x="736.1" y="164.2" width="0.8" height="1.5" fill="#800000"/><rect x="737.1" y="164.7" width="0.8" height="1.0" fill="#800000"/><rect x="738.1" y="164.7" width="0.8" height="1.0" fill="#800000"/><rect x="739.1" y="164.2" width="0.8" height="1.5" fill="#800000"/><rect x="740.1" y="164.2" width="0.8" height="1.5" fill="#800000"/><rect x="741.1" y="164.2" width="0.8" height="1.5" fill="#800000"/><rect x="742.1" y="164.7" width="0.8" height="1.3" fill="#800000"/><rect x="744.1" y="164.2" width="0.8" height="1.5" fill="#e50000"/><rect x="745.1" y="164.2" width="0.8" height="1.5" fill="#e50000"/><rect x="746.1" y="164.7" width="0.8" height="1.0" fill="#e50000"/><rect x="747.1" y="164.2" width="0.8" height="1.5" fill="#e50000"/><rect x="748.1" y="164.2" width="0.8" height="1.5" fill="#e50000"/><rect x="749.1" y="164.2" width="0.8" height="1.5" fill="#e50000"/><rect x="750.1" y="164.7" width="0.8" height="1.0" fill="#e50000"/><rect x="751.1" y="164.9" width="0.8" height="0.6" fill="#000000"/><rect x="752.1" y="164.2" width="0.8" height="1.5" fill="#0451a5"/><rect x="753.1" y="164.2" width="0.8" height="1.5" fill="#0451a5"/><rect x="754.1" y="164.7" width="0.8" height="1.0" fill="#0451a5"/><rect x="755.1" y="164.7" width="0.8" height="1.0" fill="#0451a5"/><rect x="756.1" y="164.7" width="0.8" height="1.0" fill="#0451a5"/><rect x="757.1" y="164.2" width="0.8" height="1.5" fill="#0451a5"/><rect x="759.1" y="164.2" width="0.8" height="1.5" fill="#e50000"/><rect x="760.1" y="164.7" width="0.8" height="1.0" fill="#e50000"/><rect x="761.1" y="164.7" width="0.8" height="1.0" fill="#e50000"/><rect x="762.1" y="164.2" width="0.8" height="1.5" fill="#e50000"/><rect x="763.1" y="164.7" width="0.8" height="1.0" fill="#e50000"/><rect x="764.1" y="164.7" width="0.8" height="1.0" fill="#e50000"/><rect x="765.1" y="164.2" width="0.8" height="1.5" fill="#e50000"/><rect x="766.1" y="164.9" width="0.8" height="0.6" fill="#000000"/><rect x="767.1" y="164.2" width="0.8" height="1.5" fill="#0451a5"/><rect x="768.1" y="164.2" width="0.8" height="1.5" fill="#0451a5"/><rect x="769.1" y="164.2" width="0.8" height="1.5" fill="#0451a5"/><rect x="770.1" y="164.7" width="0.8" height="1.0" fill="#0451a5"/><rect x="771.1" y="164.7" width="0.8" height="1.0" fill="#0451a5"/><rect x="772.1" y="164.2" width="0.8" height="1.5" fill="#0451a5"/><rect x="773.1" y="164.2" width="0.8" height="1.5" fill="#383838"/><rect x="728.1" y="166.2" width="0.8" height="1.5" fill="#383838"/><rect x="729.1" y="166.2" width="0.8" height="1.5" fill="#800000"/><rect x="730.1" y="166.7" width="0.8" height="1.0" fill="#800000"/><rect x="731.1" y="166.7" width="0.8" height="1.0" fill="#800000"/><rect x="732.1" y="166.7" width="0.8" height="1.3" fill="#800000"/><rect x="733.1" y="166.2" width="0.8" height="1.5" fill="#800000"/><rect x="734.1" y="166.7" width="0.8" height="1.0" fill="#800000"/><rect x="735.1" y="166.2" width="0.8" height="1.5" fill="#800000"/><rect x="736.1" y="166.7" width="0.8" height="1.0" fill="#800000"/><rect x="737.1" y="166.2" width="0.8" height="1.5" fill="#383838"/><rect x="732.1" y="168.2" width="0.8" height="1.5" fill="#e00000"/><rect x="733.1" y="168.2" width="0.8" height="1.5" fill="#000000"/><rect x="734.1" y="168.2" width="0.8" height="1.5" fill="#000000"/><rect x="735.1" y="168.7" width="0.8" height="1.0" fill="#000000"/><rect x="736.1" y="168.7" width="0.8" height="1.0" fill="#000000"/><rect x="737.1" y="169.3" width="0.8" height="0.5" fill="#000000"/><rect x="738.1" y="168.2" width="0.8" height="1.5" fill="#000000"/><rect x="739.1" y="168.7" width="0.8" height="1.0" fill="#000000"/><rect x="740.1" y="168.7" width="0.8" height="1.0" fill="#000000"/><rect x="741.1" y="168.7" width="0.8" height="1.0" fill="#000000"/><rect x="742.1" y="168.7" width="0.8" height="1.0" fill="#000000"/><rect x="743.1" y="168.7" width="0.8" height="1.0" fill="#000000"/><rect x="744.1" y="168.2" width="0.8" height="1.5" fill="#000000"/><rect x="745.1" y="168.7" width="0.8" height="1.0" fill="#000000"/><rect x="746.1" y="168.7" width="0.8" height="1.3" fill="#000000"/><rect x="747.1" y="168.7" width="0.8" height="1.0" fill="#000000"/><rect x="748.1" y="169.3" width="0.8" height="0.5" fill="#000000"/><rect x="749.1" y="168.2" width="0.8" height="1.5" fill="#000000"/><rect x="750.1" y="168.7" width="0.8" height="1.0" fill="#000000"/><rect x="751.1" y="168.2" width="0.8" height="1.5" fill="#000000"/><rect x="752.1" y="168.2" width="0.8" height="1.5" fill="#000000"/><rect x="753.1" y="168.7" width="0.8" height="1.0" fill="#000000"/><rect x="754.1" y="168.2" width="0.8" height="1.5" fill="#000000"/><rect x="755.1" y="168.7" width="0.8" height="1.0" fill="#000000"/><rect x="756.1" y="168.7" width="0.8" height="1.3" fill="#000000"/><rect x="757.1" y="168.2" width="0.8" height="1.5" fill="#000000"/><rect x="758.1" y="168.2" width="0.8" height="1.5" fill="#000000"/><rect x="759.1" y="168.2" width="0.8" height="1.5" fill="#000000"/><rect x="760.1" y="168.2" width="0.8" height="1.5" fill="#000000"/><rect x="761.1" y="168.2" width="0.8" height="1.5" fill="#000000"/><rect x="728.1" y="170.2" width="0.8" height="1.5" fill="#383838"/><rect x="729.1" y="170.2" width="0.8" height="1.5" fill="#383838"/><rect x="730.1" y="170.2" width="0.8" height="1.5" fill="#800000"/><rect x="731.1" y="170.7" width="0.8" height="1.0" fill="#800000"/><rect x="732.1" y="170.7" width="0.8" height="1.0" fill="#800000"/><rect x="733.1" y="170.7" width="0.8" height="1.3" fill="#800000"/><rect x="734.1" y="170.2" width="0.8" height="1.5" fill="#800000"/><rect x="735.1" y="170.7" width="0.8" height="1.0" fill="#800000"/><rect x="736.1" y="170.2" width="0.8" height="1.5" fill="#800000"/><rect x="737.1" y="170.7" width="0.8" height="1.0" fill="#800000"/><rect x="738.1" y="170.2" width="0.8" height="1.5" fill="#383838"/><rect x="724.1" y="172.2" width="0.8" height="1.5" fill="#383838"/><rect x="725.1" y="172.2" width="0.8" height="1.5" fill="#383838"/><rect x="726.1" y="172.2" width="0.8" height="1.5" fill="#800000"/><rect x="727.1" y="172.2" width="0.8" height="1.5" fill="#800000"/><rect x="728.1" y="172.7" width="0.8" height="1.0" fill="#800000"/><rect x="729.1" y="172.7" width="0.8" height="1.0" fill="#800000"/><rect x="730.1" y="172.2" width="0.8" height="1.5" fill="#800000"/><rect x="731.1" y="172.2" width="0.8" height="1.5" fill="#800000"/><rect x="732.1" y="172.7" width="0.8" height="1.0" fill="#800000"/><rect x="733.1" y="172.7" width="0.8" height="1.0" fill="#800000"/><rect x="734.1" y="172.2" width="0.8" height="1.5" fill="#800000"/><rect x="735.1" y="172.7" width="0.8" height="1.0" fill="#800000"/><rect x="736.1" y="172.7" width="0.8" height="1.0" fill="#800000"/><rect x="737.1" y="172.2" width="0.8" height="1.5" fill="#800000"/><rect x="738.1" y="172.7" width="0.8" height="1.0" fill="#800000"/><rect x="739.1" y="172.7" width="0.8" height="1.0" fill="#800000"/><rect x="740.1" y="172.2" width="0.8" height="1.5" fill="#800000"/><rect x="741.1" y="172.2" width="0.8" height="1.5" fill="#800000"/><rect x="742.1" y="172.2" width="0.8" height="1.5" fill="#800000"/><rect x="743.1" y="172.7" width="0.8" height="1.3" fill="#800000"/><rect x="744.1" y="172.2" width="0.8" height="1.5" fill="#383838"/><rect x="724.1" y="174.2" width="0.8" height="1.5" fill="#383838"/><rect x="725.1" y="174.2" width="0.8" height="1.5" fill="#800000"/><rect x="726.1" y="174.2" width="0.8" height="1.5" fill="#800000"/><rect x="727.1" y="174.7" width="0.8" height="1.0" fill="#800000"/><rect x="728.1" y="174.7" width="0.8" height="1.0" fill="#800000"/><rect x="729.1" y="174.2" width="0.8" height="1.5" fill="#800000"/><rect x="730.1" y="174.2" width="0.8" height="1.5" fill="#800000"/><rect x="731.1" y="174.7" width="0.8" height="1.0" fill="#800000"/><rect x="732.1" y="174.7" width="0.8" height="1.0" fill="#800000"/><rect x="733.1" y="174.2" width="0.8" height="1.5" fill="#800000"/><rect x="734.1" y="174.7" width="0.8" height="1.0" fill="#800000"/><rect x="735.1" y="174.7" width="0.8" height="1.0" fill="#800000"/><rect x="736.1" y="174.2" width="0.8" height="1.5" fill="#800000"/><rect x="737.1" y="174.7" width="0.8" height="1.0" fill="#800000"/><rect x="738.1" y="174.2" width="0.8" height="1.5" fill="#800000"/><rect x="739.1" y="174.7" width="0.8" height="1.0" fill="#800000"/><rect x="740.1" y="174.2" width="0.8" height="1.5" fill="#800000"/><rect x="741.1" y="174.7" width="0.8" height="1.0" fill="#800000"/><rect x="743.1" y="174.2" width="0.8" height="1.5" fill="#e50000"/><rect x="744.1" y="174.2" width="0.8" height="1.5" fill="#e50000"/><rect x="745.1" y="174.7" width="0.8" height="1.0" fill="#e50000"/><rect x="746.1" y="174.2" width="0.8" height="1.5" fill="#e50000"/><rect x="747.1" y="174.2" width="0.8" height="1.5" fill="#e50000"/><rect x="748.1" y="174.2" width="0.8" height="1.5" fill="#e50000"/><rect x="749.1" y="174.7" width="0.8" height="1.0" fill="#e50000"/><rect x="750.1" y="174.9" width="0.8" height="0.6" fill="#000000"/><rect x="751.1" y="174.2" width="0.8" height="1.5" fill="#0451a5"/><rect x="752.1" y="174.2" width="0.8" height="1.5" fill="#0451a5"/><rect x="753.1" y="174.7" width="0.8" height="1.0" fill="#0451a5"/><rect x="754.1" y="174.7" width="0.8" height="1.0" fill="#0451a5"/><rect x="755.1" y="174.7" width="0.8" height="1.0" fill="#0451a5"/><rect x="756.1" y="174.2" width="0.8" height="1.5" fill="#0451a5"/><rect x="757.1" y="174.2" width="0.8" height="1.5" fill="#383838"/><rect x="758.1" y="174.2" width="0.8" height="1.5" fill="#383838"/><rect x="759.1" y="174.2" width="0.8" height="1.5" fill="#383838"/><rect x="712.1" y="176.2" width="0.8" height="1.5" fill="#800000"/><rect x="713.1" y="176.2" width="0.8" height="1.5" fill="#800000"/><rect x="714.1" y="176.7" width="0.8" height="1.0" fill="#800000"/><rect x="715.1" y="176.7" width="0.8" height="1.0" fill="#800000"/><rect x="716.1" y="176.2" width="0.8" height="1.5" fill="#800000"/><rect x="717.1" y="176.2" width="0.8" height="1.5" fill="#800000"/><rect x="718.1" y="176.7" width="0.8" height="1.0" fill="#800000"/><rect x="719.1" y="176.7" width="0.8" height="1.0" fill="#800000"/><rect x="720.1" y="176.2" width="0.8" height="1.5" fill="#800000"/><rect x="721.1" y="176.7" width="0.8" height="1.0" fill="#800000"/><rect x="722.1" y="176.7" width="0.8" height="1.0" fill="#800000"/><rect x="723.1" y="176.2" width="0.8" height="1.5" fill="#800000"/><rect x="724.1" y="176.7" width="0.8" height="1.0" fill="#800000"/><rect x="725.1" y="176.2" width="0.8" height="1.5" fill="#800000"/><rect x="726.1" y="176.7" width="0.8" height="1.0" fill="#800000"/><rect x="727.1" y="176.2" width="0.8" height="1.5" fill="#800000"/><rect x="728.1" y="176.7" width="0.8" height="1.0" fill="#800000"/><rect x="729.1" y="176.2" width="0.8" height="1.5" fill="#383838"/><rect x="720.1" y="178.2" width="0.8" height="1.5" fill="#383838"/><rect x="721.1" y="178.2" width="0.8" height="1.5" fill="#383838"/><rect x="722.1" y="178.2" width="0.8" height="1.5" fill="#800000"/><rect x="723.1" y="178.2" width="0.8" height="1.5" fill="#800000"/><rect x="724.1" y="178.7" width="0.8" height="1.0" fill="#800000"/><rect x="725.1" y="178.7" width="0.8" height="1.0" fill="#800000"/><rect x="726.1" y="178.2" width="0.8" height="1.5" fill="#800000"/><rect x="727.1" y="178.2" width="0.8" height="1.5" fill="#800000"/><rect x="728.1" y="178.7" width="0.8" height="1.0" fill="#800000"/><rect x="729.1" y="178.7" width="0.8" height="1.0" fill="#800000"/><rect x="730.1" y="178.2" width="0.8" height="1.5" fill="#800000"/><rect x="731.1" y="178.7" width="0.8" height="1.0" fill="#800000"/><rect x="732.1" y="178.7" width="0.8" height="1.0" fill="#800000"/><rect x="733.1" y="178.2" width="0.8" height="1.5" fill="#383838"/><rect x="716.1" y="180.2" width="0.8" height="1.5" fill="#383838"/><rect x="717.1" y="180.2" width="0.8" height="1.5" fill="#383838"/><rect x="718.1" y="180.2" width="0.8" height="1.5" fill="#800000"/><rect x="719.1" y="180.2" width="0.8" height="1.5" fill="#800000"/><rect x="720.1" y="180.7" width="0.8" height="1.0" fill="#800000"/><rect x="721.1" y="180.7" width="0.8" height="1.0" fill="#800000"/><rect x="722.1" y="180.2" width="0.8" height="1.5" fill="#800000"/><rect x="723.1" y="180.2" width="0.8" height="1.5" fill="#800000"/><rect x="724.1" y="180.7" width="0.8" height="1.0" fill="#800000"/><rect x="725.1" y="180.7" width="0.8" height="1.0" fill="#800000"/><rect x="726.1" y="180.2" width="0.8" height="1.5" fill="#800000"/><rect x="727.1" y="180.7" width="0.8" height="1.0" fill="#800000"/><rect x="728.1" y="180.7" width="0.8" height="1.0" fill="#800000"/><rect x="729.1" y="180.2" width="0.8" height="1.5" fill="#800000"/><rect x="730.1" y="180.2" width="0.8" height="1.5" fill="#800000"/><rect x="731.1" y="180.7" width="0.8" height="1.0" fill="#800000"/><rect x="732.1" y="180.7" width="0.8" height="1.0" fill="#800000"/><rect x="733.1" y="180.7" width="0.8" height="1.0" fill="#800000"/><rect x="734.1" y="180.2" width="0.8" height="1.5" fill="#383838"/><rect x="712.1" y="182.2" width="0.8" height="1.5" fill="#383838"/><rect x="713.1" y="182.2" width="0.8" height="1.5" fill="#383838"/><rect x="714.1" y="182.2" width="0.8" height="1.5" fill="#800000"/><rect x="715.1" y="182.7" width="0.8" height="1.0" fill="#800000"/><rect x="716.1" y="182.2" width="0.8" height="1.5" fill="#800000"/><rect x="717.1" y="182.7" width="0.8" height="1.0" fill="#800000"/><rect x="718.1" y="182.7" width="0.8" height="1.0" fill="#800000"/><rect x="719.1" y="182.2" width="0.8" height="1.5" fill="#800000"/><rect x="720.1" y="182.2" width="0.8" height="1.5" fill="#800000"/><rect x="721.1" y="182.2" width="0.8" height="1.5" fill="#800000"/><rect x="722.1" y="182.2" width="0.8" height="1.5" fill="#800000"/><rect x="723.1" y="182.7" width="0.8" height="1.0" fill="#800000"/><rect x="724.1" y="182.7" width="0.8" height="1.0" fill="#800000"/><rect x="725.1" y="182.2" width="0.8" height="1.5" fill="#800000"/><rect x="726.1" y="182.2" width="0.8" height="1.5" fill="#383838"/><rect x="712.1" y="186.2" width="0.8" height="1.5" fill="#e00000"/><rect x="713.1" y="186.7" width="0.8" height="1.0" fill="#000000"/><rect x="714.1" y="186.7" width="0.8" height="1.0" fill="#000000"/><rect x="715.1" y="186.2" width="0.8" height="1.5" fill="#000000"/><rect x="716.1" y="186.7" width="0.8" height="1.0" fill="#000000"/><rect x="718.1" y="186.2" width="0.8" height="1.5" fill="#000000"/><rect x="716.1" y="188.7" width="0.8" height="1.3" fill="#000000"/><rect x="717.1" y="188.7" width="0.8" height="1.0" fill="#000000"/><rect x="718.1" y="188.2" width="0.8" height="1.5" fill="#000000"/><rect x="719.1" y="188.2" width="0.8" height="1.5" fill="#000000"/><rect x="720.1" y="188.2" width="0.8" height="1.5" fill="#000000"/><rect x="721.1" y="188.7" width="0.8" height="1.0" fill="#000000"/><rect x="723.1" y="188.7" width="0.8" height="1.0" fill="#000000"/><rect x="724.1" y="188.2" width="0.8" height="1.5" fill="#000000"/><rect x="725.1" y="188.7" width="0.8" height="1.0" fill="#000000"/><rect x="726.1" y="188.7" width="0.8" height="1.0" fill="#000000"/><rect x="727.1" y="188.7" width="0.8" height="1.0" fill="#000000"/><rect x="729.1" y="188.2" width="0.8" height="1.5" fill="#000000"/><rect x="730.1" y="188.7" width="0.8" height="1.0" fill="#000000"/><rect x="731.1" y="188.2" width="0.8" height="1.5" fill="#000000"/><rect x="732.1" y="188.7" width="0.8" height="1.0" fill="#000000"/><rect x="733.1" y="188.2" width="0.8" height="1.5" fill="#000000"/><rect x="734.1" y="188.2" width="0.8" height="1.5" fill="#000000"/><rect x="735.1" y="188.7" width="0.8" height="1.0" fill="#000000"/><rect x="736.1" y="188.2" width="0.8" height="1.5" fill="#000000"/><rect x="737.1" y="188.7" width="0.8" height="1.0" fill="#000000"/><rect x="716.1" y="190.2" width="0.8" height="1.5" fill="#000000"/><rect x="720.1" y="192.7" width="0.8" height="1.3" fill="#000000"/><rect x="721.1" y="192.7" width="0.8" height="1.0" fill="#000000"/><rect x="722.1" y="192.2" width="0.8" height="1.5" fill="#000000"/><rect x="723.1" y="192.2" width="0.8" height="1.5" fill="#000000"/><rect x="724.1" y="192.2" width="0.8" height="1.5" fill="#000000"/><rect x="725.1" y="192.7" width="0.8" height="1.0" fill="#000000"/><rect x="727.1" y="192.7" width="0.8" height="1.0" fill="#000000"/><rect x="728.1" y="192.2" width="0.8" height="1.5" fill="#000000"/><rect x="729.1" y="192.7" width="0.8" height="1.0" fill="#000000"/><rect x="730.1" y="192.2" width="0.8" height="1.5" fill="#000000"/><rect x="731.1" y="192.7" width="0.8" height="1.0" fill="#000000"/><rect x="732.1" y="192.7" width="0.8" height="1.3" fill="#000000"/><rect x="734.1" y="192.2" width="0.8" height="1.5" fill="#000000"/><rect x="735.1" y="192.7" width="0.8" height="1.0" fill="#000000"/><rect x="736.1" y="192.7" width="0.8" height="1.0" fill="#000000"/><rect x="737.1" y="192.7" width="0.8" height="1.0" fill="#000000"/><rect x="738.1" y="192.7" width="0.8" height="1.0" fill="#000000"/><rect x="739.1" y="192.7" width="0.8" height="1.0" fill="#000000"/><rect x="741.1" y="192.2" width="0.8" height="1.5" fill="#000000"/><rect x="743.1" y="192.7" width="0.8" height="1.3" fill="#000000"/><rect x="744.1" y="192.7" width="0.8" height="1.0" fill="#000000"/><rect x="745.1" y="192.2" width="0.8" height="1.5" fill="#000000"/><rect x="746.1" y="192.9" width="0.8" height="0.6" fill="#000000"/><rect x="748.1" y="192.7" width="0.8" height="1.0" fill="#000000"/><rect x="749.1" y="192.7" width="0.8" height="1.0" fill="#000000"/><rect x="750.1" y="192.2" width="0.8" height="1.5" fill="#000000"/><rect x="751.1" y="192.9" width="0.8" height="0.6" fill="#000000"/><rect x="753.1" y="192.2" width="0.8" height="1.5" fill="#000000"/><rect x="720.1" y="194.7" width="0.8" height="1.3" fill="#000000"/><rect x="721.1" y="194.7" width="0.8" height="1.0" fill="#000000"/><rect x="722.1" y="194.2" width="0.8" height="1.5" fill="#000000"/><rect x="723.1" y="194.2" width="0.8" height="1.5" fill="#000000"/><rect x="724.1" y="194.2" width="0.8" height="1.5" fill="#000000"/><rect x="725.1" y="194.7" width="0.8" height="1.0" fill="#000000"/><rect x="727.1" y="194.2" width="0.8" height="1.5" fill="#000000"/><rect x="728.1" y="194.7" width="0.8" height="1.0" fill="#000000"/><rect x="729.1" y="194.7" width="0.8" height="1.0" fill="#000000"/><rect x="730.1" y="194.2" width="0.8" height="1.5" fill="#000000"/><rect x="731.1" y="194.2" width="0.8" height="1.5" fill="#000000"/><rect x="732.1" y="194.7" width="0.8" height="1.0" fill="#000000"/><rect x="734.1" y="194.2" width="0.8" height="1.5" fill="#000000"/><rect x="735.1" y="194.7" width="0.8" height="1.0" fill="#000000"/><rect x="736.1" y="194.7" width="0.8" height="1.0" fill="#000000"/><rect x="737.1" y="194.7" width="0.8" height="1.0" fill="#000000"/><rect x="738.1" y="194.7" width="0.8" height="1.0" fill="#000000"/><rect x="739.1" y="194.7" width="0.8" height="1.0" fill="#000000"/><rect x="740.1" y="194.2" width="0.8" height="1.5" fill="#000000"/><rect x="741.1" y="194.7" width="0.8" height="1.0" fill="#000000"/><rect x="742.1" y="194.7" width="0.8" height="1.3" fill="#000000"/><rect x="743.1" y="194.7" width="0.8" height="1.0" fill="#000000"/><rect x="745.1" y="194.2" width="0.8" height="1.5" fill="#000000"/><rect x="747.1" y="194.7" width="0.8" height="1.3" fill="#000000"/><rect x="748.1" y="194.7" width="0.8" height="1.0" fill="#000000"/><rect x="749.1" y="194.2" width="0.8" height="1.5" fill="#000000"/><rect x="750.1" y="194.9" width="0.8" height="0.6" fill="#000000"/><rect x="752.1" y="194.7" width="0.8" height="1.0" fill="#000000"/><rect x="753.1" y="194.7" width="0.8" height="1.0" fill="#000000"/><rect x="754.1" y="194.2" width="0.8" height="1.5" fill="#000000"/><rect x="755.1" y="194.9" width="0.8" height="0.6" fill="#000000"/><rect x="757.1" y="194.2" width="0.8" height="1.5" fill="#000000"/><rect x="720.1" y="196.7" width="0.8" height="1.3" fill="#000000"/><rect x="721.1" y="196.7" width="0.8" height="1.0" fill="#000000"/><rect x="722.1" y="196.2" width="0.8" height="1.5" fill="#000000"/><rect x="723.1" y="196.2" width="0.8" height="1.5" fill="#000000"/><rect x="724.1" y="196.2" width="0.8" height="1.5" fill="#000000"/><rect x="725.1" y="196.7" width="0.8" height="1.0" fill="#000000"/><rect x="727.1" y="196.2" width="0.8" height="1.5" fill="#000000"/><rect x="728.1" y="196.7" width="0.8" height="1.0" fill="#000000"/><rect x="729.1" y="196.7" width="0.8" height="1.0" fill="#000000"/><rect x="730.1" y="196.2" width="0.8" height="1.5" fill="#000000"/><rect x="732.1" y="196.2" width="0.8" height="1.5" fill="#000000"/><rect x="733.1" y="196.7" width="0.8" height="1.0" fill="#000000"/><rect x="734.1" y="196.7" width="0.8" height="1.3" fill="#000000"/><rect x="735.1" y="196.2" width="0.8" height="1.5" fill="#000000"/><rect x="736.1" y="196.7" width="0.8" height="1.0" fill="#000000"/><rect x="737.1" y="196.2" width="0.8" height="1.5" fill="#000000"/><rect x="738.1" y="196.7" width="0.8" height="1.0" fill="#000000"/><rect x="740.1" y="196.2" width="0.8" height="1.5" fill="#000000"/><rect x="742.1" y="196.7" width="0.8" height="1.3" fill="#000000"/><rect x="743.1" y="196.7" width="0.8" height="1.0" fill="#000000"/><rect x="744.1" y="196.2" width="0.8" height="1.5" fill="#000000"/><rect x="745.1" y="196.9" width="0.8" height="0.6" fill="#000000"/><rect x="747.1" y="196.7" width="0.8" height="1.0" fill="#000000"/><rect x="748.1" y="196.7" width="0.8" height="1.0" fill="#000000"/><rect x="749.1" y="196.2" width="0.8" height="1.5" fill="#000000"/><rect x="750.1" y="196.9" width="0.8" height="0.6" fill="#000000"/><rect x="752.1" y="196.2" width="0.8" height="1.5" fill="#000000"/><rect x="716.1" y="198.2" width="0.8" height="1.5" fill="#000000"/><rect x="716.1" y="202.7" width="0.8" height="1.3" fill="#000000"/><rect x="717.1" y="202.7" width="0.8" height="1.0" fill="#000000"/><rect x="718.1" y="202.2" width="0.8" height="1.5" fill="#000000"/><rect x="719.1" y="202.2" width="0.8" height="1.5" fill="#000000"/><rect x="720.1" y="202.2" width="0.8" height="1.5" fill="#000000"/><rect x="721.1" y="202.7" width="0.8" height="1.0" fill="#000000"/><rect x="723.1" y="202.2" width="0.8" height="1.5" fill="#000000"/><rect x="724.1" y="202.2" width="0.8" height="1.5" fill="#000000"/><rect x="725.1" y="202.7" width="0.8" height="1.0" fill="#000000"/><rect x="726.1" y="202.2" width="0.8" height="1.5" fill="#000000"/><rect x="727.1" y="202.2" width="0.8" height="1.5" fill="#000000"/><rect x="728.1" y="202.2" width="0.8" height="1.5" fill="#800000"/><rect x="729.1" y="202.7" width="0.8" height="1.0" fill="#800000"/><rect x="730.1" y="202.2" width="0.8" height="1.5" fill="#800000"/><rect x="731.1" y="202.7" width="0.8" height="1.0" fill="#800000"/><rect x="732.1" y="202.2" width="0.8" height="1.5" fill="#800000"/><rect x="733.1" y="202.2" width="0.8" height="1.5" fill="#800000"/><rect x="734.1" y="202.7" width="0.8" height="1.0" fill="#800000"/><rect x="735.1" y="202.2" width="0.8" height="1.5" fill="#800000"/><rect x="736.1" y="202.7" width="0.8" height="1.0" fill="#800000"/><rect x="737.1" y="202.2" width="0.8" height="1.5" fill="#000000"/><rect x="739.1" y="202.2" width="0.8" height="1.5" fill="#000000"/><rect x="740.1" y="202.7" width="0.8" height="1.0" fill="#000000"/><rect x="741.1" y="202.2" width="0.8" height="1.5" fill="#000000"/><rect x="742.1" y="202.7" width="0.8" height="1.0" fill="#000000"/><rect x="744.1" y="202.9" width="0.8" height="0.6" fill="#000000"/><rect x="746.1" y="202.7" width="0.8" height="1.0" fill="#000000"/><rect x="747.1" y="202.7" width="0.8" height="1.0" fill="#000000"/><rect x="748.1" y="202.7" width="0.8" height="1.0" fill="#000000"/><rect x="750.1" y="202.2" width="0.8" height="1.5" fill="#000000"/><rect x="751.1" y="202.2" width="0.8" height="1.5" fill="#000000"/><rect x="752.1" y="202.7" width="0.8" height="1.0" fill="#000000"/><rect x="753.1" y="202.2" width="0.8" height="1.5" fill="#000000"/><rect x="754.1" y="202.2" width="0.8" height="1.5" fill="#000000"/><rect x="755.1" y="202.2" width="0.8" height="1.5" fill="#800000"/><rect x="756.1" y="202.7" width="0.8" height="1.0" fill="#800000"/><rect x="757.1" y="202.2" width="0.8" height="1.5" fill="#800000"/><rect x="758.1" y="202.7" width="0.8" height="1.0" fill="#800000"/><rect x="759.1" y="202.2" width="0.8" height="1.5" fill="#800000"/><rect x="760.1" y="202.2" width="0.8" height="1.5" fill="#800000"/><rect x="761.1" y="202.7" width="0.8" height="1.0" fill="#800000"/><rect x="762.1" y="202.2" width="0.8" height="1.5" fill="#800000"/><rect x="763.1" y="202.7" width="0.8" height="1.0" fill="#800000"/><rect x="764.1" y="202.2" width="0.8" height="1.5" fill="#000000"/><rect x="765.1" y="202.2" width="0.8" height="1.5" fill="#000000"/><rect x="766.1" y="202.2" width="0.8" height="1.5" fill="#000000"/><rect x="716.1" y="204.2" width="0.8" height="1.5" fill="#000000"/><rect x="720.1" y="206.7" width="0.8" height="1.0" fill="#000000"/><rect x="721.1" y="206.7" width="0.8" height="1.0" fill="#000000"/><rect x="722.1" y="206.7" width="0.8" height="1.0" fill="#000000"/><rect x="724.1" y="206.2" width="0.8" height="1.5" fill="#000000"/><rect x="725.1" y="206.7" width="0.8" height="1.0" fill="#000000"/><rect x="726.1" y="206.2" width="0.8" height="1.5" fill="#000000"/><rect x="727.1" y="206.7" width="0.8" height="1.0" fill="#000000"/><rect x="728.1" y="206.2" width="0.8" height="1.5" fill="#000000"/><rect x="729.1" y="206.2" width="0.8" height="1.5" fill="#000000"/><rect x="730.1" y="206.7" width="0.8" height="1.0" fill="#000000"/><rect x="731.1" y="206.2" width="0.8" height="1.5" fill="#000000"/><rect x="732.1" y="206.7" width="0.8" height="1.0" fill="#000000"/><rect x="733.1" y="206.2" width="0.8" height="1.5" fill="#000000"/><rect x="734.1" y="206.2" width="0.8" height="1.5" fill="#000000"/><rect x="720.1" y="208.2" width="0.8" height="1.5" fill="#000000"/><rect x="724.1" y="210.2" width="0.8" height="1.5" fill="#000000"/><rect x="725.1" y="210.7" width="0.8" height="1.0" fill="#000000"/><rect x="726.1" y="210.7" width="0.8" height="1.0" fill="#000000"/><rect x="727.1" y="210.7" width="0.8" height="1.0" fill="#000000"/><rect x="728.1" y="210.7" width="0.8" height="1.0" fill="#000000"/><rect x="729.1" y="210.7" width="0.8" height="1.0" fill="#000000"/><rect x="731.1" y="210.9" width="0.8" height="0.6" fill="#000000"/><rect x="733.1" y="210.2" width="0.8" height="1.5" fill="#000000"/><rect x="734.1" y="210.2" width="0.8" height="1.5" fill="#000000"/><rect x="735.1" y="210.7" width="0.8" height="1.3" fill="#000000"/><rect x="736.1" y="210.2" width="0.8" height="1.5" fill="#000000"/><rect x="737.1" y="210.7" width="0.8" height="1.0" fill="#000000"/><rect x="738.1" y="210.7" width="0.8" height="1.0" fill="#000000"/><rect x="739.1" y="210.2" width="0.8" height="1.5" fill="#000000"/><rect x="740.1" y="211.3" width="0.8" height="0.5" fill="#000000"/><rect x="724.1" y="212.2" width="0.8" height="1.5" fill="#000000"/><rect x="725.1" y="212.7" width="0.8" height="1.0" fill="#000000"/><rect x="726.1" y="212.7" width="0.8" height="1.0" fill="#000000"/><rect x="727.1" y="212.7" width="0.8" height="1.0" fill="#000000"/><rect x="728.1" y="212.7" width="0.8" height="1.0" fill="#000000"/><rect x="729.1" y="212.7" width="0.8" height="1.0" fill="#000000"/><rect x="730.1" y="212.2" width="0.8" height="1.5" fill="#000000"/><rect x="731.1" y="212.7" width="0.8" height="1.0" fill="#000000"/><rect x="732.1" y="212.7" width="0.8" height="1.3" fill="#000000"/><rect x="733.1" y="212.7" width="0.8" height="1.0" fill="#000000"/><rect x="735.1" y="212.9" width="0.8" height="0.6" fill="#000000"/><rect x="737.1" y="212.2" width="0.8" height="1.5" fill="#000000"/><rect x="738.1" y="212.2" width="0.8" height="1.5" fill="#000000"/><rect x="739.1" y="213.3" width="0.8" height="0.5" fill="#000000"/><rect x="724.1" y="214.2" width="0.8" height="1.5" fill="#000000"/><rect x="725.1" y="214.7" width="0.8" height="1.0" fill="#000000"/><rect x="726.1" y="214.7" width="0.8" height="1.3" fill="#000000"/><rect x="727.1" y="214.2" width="0.8" height="1.5" fill="#000000"/><rect x="728.1" y="214.7" width="0.8" height="1.0" fill="#000000"/><rect x="729.1" y="214.2" width="0.8" height="1.5" fill="#000000"/><rect x="730.1" y="214.7" width="0.8" height="1.0" fill="#000000"/><rect x="732.1" y="214.9" width="0.8" height="0.6" fill="#000000"/><rect x="734.1" y="214.2" width="0.8" height="1.5" fill="#000000"/><rect x="735.1" y="214.7" width="0.8" height="1.0" fill="#000000"/><rect x="736.1" y="214.7" width="0.8" height="1.0" fill="#000000"/><rect x="737.1" y="214.7" width="0.8" height="1.0" fill="#000000"/><rect x="720.1" y="216.2" width="0.8" height="1.5" fill="#000000"/><rect x="721.1" y="217.3" width="0.8" height="0.5" fill="#000000"/><rect x="720.1" y="218.7" width="0.8" height="1.0" fill="#000000"/><rect x="721.1" y="218.7" width="0.8" height="1.0" fill="#000000"/><rect x="722.1" y="218.7" width="0.8" height="1.0" fill="#000000"/><rect x="724.1" y="218.2" width="0.8" height="1.5" fill="#000000"/><rect x="725.1" y="218.7" width="0.8" height="1.0" fill="#000000"/><rect x="726.1" y="218.2" width="0.8" height="1.5" fill="#000000"/><rect x="727.1" y="218.7" width="0.8" height="1.0" fill="#000000"/><rect x="728.1" y="218.2" width="0.8" height="1.5" fill="#000000"/><rect x="729.1" y="218.2" width="0.8" height="1.5" fill="#000000"/><rect x="730.1" y="218.7" width="0.8" height="1.0" fill="#000000"/><rect x="731.1" y="218.2" width="0.8" height="1.5" fill="#000000"/><rect x="732.1" y="218.7" width="0.8" height="1.0" fill="#000000"/><rect x="733.1" y="218.2" width="0.8" height="1.5" fill="#000000"/><rect x="734.1" y="218.2" width="0.8" height="1.5" fill="#000000"/><rect x="720.1" y="220.2" width="0.8" height="1.5" fill="#000000"/><rect x="724.1" y="222.2" width="0.8" height="1.5" fill="#000000"/><rect x="725.1" y="222.7" width="0.8" height="1.0" fill="#000000"/><rect x="726.1" y="222.7" width="0.8" height="1.0" fill="#000000"/><rect x="727.1" y="222.7" width="0.8" height="1.0" fill="#000000"/><rect x="728.1" y="222.7" width="0.8" height="1.0" fill="#000000"/><rect x="729.1" y="222.7" width="0.8" height="1.0" fill="#000000"/><rect x="731.1" y="222.9" width="0.8" height="0.6" fill="#000000"/><rect x="733.1" y="222.2" width="0.8" height="1.5" fill="#000000"/><rect x="734.1" y="222.2" width="0.8" height="1.5" fill="#000000"/><rect x="735.1" y="222.7" width="0.8" height="1.0" fill="#000000"/><rect x="736.1" y="222.2" width="0.8" height="1.5" fill="#000000"/><rect x="737.1" y="222.7" width="0.8" height="1.0" fill="#000000"/><rect x="738.1" y="222.7" width="0.8" height="1.0" fill="#000000"/><rect x="739.1" y="222.2" width="0.8" height="1.5" fill="#000000"/><rect x="740.1" y="223.3" width="0.8" height="0.5" fill="#000000"/><rect x="724.1" y="224.2" width="0.8" height="1.5" fill="#000000"/><rect x="725.1" y="224.7" width="0.8" height="1.0" fill="#000000"/><rect x="726.1" y="224.7" width="0.8" height="1.0" fill="#000000"/><rect x="727.1" y="224.7" width="0.8" height="1.0" fill="#000000"/><rect x="728.1" y="224.7" width="0.8" height="1.0" fill="#000000"/><rect x="729.1" y="224.7" width="0.8" height="1.0" fill="#000000"/><rect x="730.1" y="224.2" width="0.8" height="1.5" fill="#000000"/><rect x="731.1" y="224.7" width="0.8" height="1.0" fill="#000000"/><rect x="732.1" y="224.7" width="0.8" height="1.3" fill="#000000"/><rect x="733.1" y="224.7" width="0.8" height="1.0" fill="#000000"/><rect x="735.1" y="224.9" width="0.8" height="0.6" fill="#000000"/><rect x="737.1" y="224.2" width="0.8" height="1.5" fill="#000000"/><rect x="738.1" y="225.3" width="0.8" height="0.5" fill="#000000"/><rect x="724.1" y="226.2" width="0.8" height="1.5" fill="#000000"/><rect x="725.1" y="226.7" width="0.8" height="1.0" fill="#000000"/><rect x="726.1" y="226.7" width="0.8" height="1.3" fill="#000000"/><rect x="727.1" y="226.2" width="0.8" height="1.5" fill="#000000"/><rect x="728.1" y="226.7" width="0.8" height="1.0" fill="#000000"/><rect x="729.1" y="226.2" width="0.8" height="1.5" fill="#000000"/><rect x="730.1" y="226.7" width="0.8" height="1.0" fill="#000000"/><rect x="732.1" y="226.9" width="0.8" height="0.6" fill="#000000"/><rect x="734.1" y="226.2" width="0.8" height="1.5" fill="#000000"/><rect x="735.1" y="226.7" width="0.8" height="1.0" fill="#000000"/><rect x="736.1" y="226.2" width="0.8" height="1.5" fill="#000000"/><rect x="737.1" y="226.7" width="0.8" height="1.0" fill="#000000"/><rect x="738.1" y="226.7" width="0.8" height="1.0" fill="#000000"/><rect x="720.1" y="228.2" width="0.8" height="1.5" fill="#000000"/><rect x="721.1" y="229.3" width="0.8" height="0.5" fill="#000000"/><rect x="720.1" y="230.7" width="0.8" height="1.0" fill="#000000"/><rect x="721.1" y="230.7" width="0.8" height="1.0" fill="#000000"/><rect x="722.1" y="230.7" width="0.8" height="1.0" fill="#000000"/><rect x="724.1" y="230.2" width="0.8" height="1.5" fill="#000000"/><rect x="725.1" y="230.7" width="0.8" height="1.0" fill="#000000"/><rect x="726.1" y="230.2" width="0.8" height="1.5" fill="#000000"/><rect x="727.1" y="230.7" width="0.8" height="1.0" fill="#000000"/><rect x="728.1" y="230.2" width="0.8" height="1.5" fill="#000000"/><rect x="729.1" y="230.2" width="0.8" height="1.5" fill="#000000"/><rect x="730.1" y="230.7" width="0.8" height="1.0" fill="#000000"/><rect x="731.1" y="230.2" width="0.8" height="1.5" fill="#000000"/><rect x="732.1" y="230.7" width="0.8" height="1.0" fill="#000000"/><rect x="733.1" y="230.2" width="0.8" height="1.5" fill="#000000"/><rect x="734.1" y="230.2" width="0.8" height="1.5" fill="#000000"/><rect x="720.1" y="232.2" width="0.8" height="1.5" fill="#000000"/><rect x="724.1" y="234.2" width="0.8" height="1.5" fill="#000000"/><rect x="725.1" y="234.7" width="0.8" height="1.0" fill="#000000"/><rect x="726.1" y="234.7" width="0.8" height="1.0" fill="#000000"/><rect x="727.1" y="234.7" width="0.8" height="1.0" fill="#000000"/><rect x="728.1" y="234.7" width="0.8" height="1.0" fill="#000000"/><rect x="729.1" y="234.7" width="0.8" height="1.0" fill="#000000"/><rect x="731.1" y="234.9" width="0.8" height="0.6" fill="#000000"/><rect x="733.1" y="234.2" width="0.8" height="1.5" fill="#000000"/><rect x="734.1" y="234.2" width="0.8" height="1.5" fill="#000000"/><rect x="735.1" y="234.7" width="0.8" height="1.0" fill="#000000"/><rect x="736.1" y="234.7" width="0.8" height="1.0" fill="#000000"/><rect x="737.1" y="234.2" width="0.8" height="1.5" fill="#000000"/><rect x="738.1" y="234.7" width="0.8" height="1.0" fill="#000000"/><rect x="739.1" y="234.7" width="0.8" height="1.0" fill="#000000"/><rect x="740.1" y="234.7" width="0.8" height="1.0" fill="#000000"/><rect x="741.1" y="234.2" width="0.8" height="1.5" fill="#000000"/><rect x="742.1" y="235.3" width="0.8" height="0.5" fill="#000000"/><rect x="724.1" y="236.2" width="0.8" height="1.5" fill="#000000"/><rect x="725.1" y="236.7" width="0.8" height="1.0" fill="#000000"/><rect x="726.1" y="236.7" width="0.8" height="1.0" fill="#000000"/><rect x="727.1" y="236.7" width="0.8" height="1.0" fill="#000000"/><rect x="728.1" y="236.7" width="0.8" height="1.0" fill="#000000"/><rect x="729.1" y="236.7" width="0.8" height="1.0" fill="#000000"/><rect x="730.1" y="236.2" width="0.8" height="1.5" fill="#000000"/><rect x="731.1" y="236.7" width="0.8" height="1.0" fill="#000000"/><rect x="732.1" y="236.7" width="0.8" height="1.3" fill="#000000"/><rect x="733.1" y="236.7" width="0.8" height="1.0" fill="#000000"/><rect x="735.1" y="236.9" width="0.8" height="0.6" fill="#000000"/><rect x="737.1" y="236.2" width="0.8" height="1.5" fill="#000000"/><rect x="738.1" y="236.2" width="0.8" height="1.5" fill="#000000"/><rect x="739.1" y="237.3" width="0.8" height="0.5" fill="#000000"/><rect x="724.1" y="238.2" width="0.8" height="1.5" fill="#000000"/><rect x="725.1" y="238.7" width="0.8" height="1.0" fill="#000000"/><rect x="726.1" y="238.7" width="0.8" height="1.3" fill="#000000"/><rect x="727.1" y="238.2" width="0.8" height="1.5" fill="#000000"/><rect x="728.1" y="238.7" width="0.8" height="1.0" fill="#000000"/><rect x="729.1" y="238.2" width="0.8" height="1.5" fill="#000000"/><rect x="730.1" y="238.7" width="0.8" height="1.0" fill="#000000"/><rect x="732.1" y="238.9" width="0.8" height="0.6" fill="#000000"/><rect x="734.1" y="238.2" width="0.8" height="1.5" fill="#000000"/><rect x="735.1" y="238.7" width="0.8" height="1.0" fill="#000000"/><rect x="736.1" y="238.2" width="0.8" height="1.5" fill="#000000"/><rect x="737.1" y="238.7" width="0.8" height="1.0" fill="#000000"/><rect x="738.1" y="238.7" width="0.8" height="1.0" fill="#000000"/><rect x="720.1" y="240.2" width="0.8" height="1.5" fill="#000000"/><rect x="721.1" y="241.3" width="0.8" height="0.5" fill="#000000"/><rect x="720.1" y="242.7" width="0.8" height="1.0" fill="#000000"/><rect x="721.1" y="242.7" width="0.8" height="1.0" fill="#000000"/><rect x="722.1" y="242.7" width="0.8" height="1.0" fill="#000000"/><rect x="724.1" y="242.2" width="0.8" height="1.5" fill="#000000"/><rect x="725.1" y="242.7" width="0.8" height="1.0" fill="#000000"/><rect x="726.1" y="242.2" width="0.8" height="1.5" fill="#000000"/><rect x="727.1" y="242.7" width="0.8" height="1.0" fill="#000000"/><rect x="728.1" y="242.2" width="0.8" height="1.5" fill="#000000"/><rect x="729.1" y="242.2" width="0.8" height="1.5" fill="#000000"/><rect x="730.1" y="242.7" width="0.8" height="1.0" fill="#000000"/><rect x="731.1" y="242.2" width="0.8" height="1.5" fill="#000000"/><rect x="732.1" y="242.7" width="0.8" height="1.0" fill="#000000"/><rect x="733.1" y="242.2" width="0.8" height="1.5" fill="#000000"/><rect x="734.1" y="242.2" width="0.8" height="1.5" fill="#000000"/><rect x="720.1" y="244.2" width="0.8" height="1.5" fill="#000000"/><rect x="724.1" y="246.2" width="0.8" height="1.5" fill="#000000"/><rect x="725.1" y="246.7" width="0.8" height="1.0" fill="#000000"/><rect x="726.1" y="246.7" width="0.8" height="1.0" fill="#000000"/><rect x="727.1" y="246.7" width="0.8" height="1.0" fill="#000000"/><rect x="728.1" y="246.7" width="0.8" height="1.0" fill="#000000"/><rect x="729.1" y="246.7" width="0.8" height="1.0" fill="#000000"/><rect x="731.1" y="246.9" width="0.8" height="0.6" fill="#000000"/><rect x="733.1" y="246.2" width="0.8" height="1.5" fill="#000000"/><rect x="734.1" y="246.2" width="0.8" height="1.5" fill="#000000"/><rect x="735.1" y="246.2" width="0.8" height="1.5" fill="#000000"/><rect x="736.1" y="246.7" width="0.8" height="1.0" fill="#000000"/><rect x="737.1" y="246.2" width="0.8" height="1.5" fill="#000000"/><rect x="738.1" y="246.2" width="0.8" height="1.5" fill="#000000"/><rect x="739.1" y="247.3" width="0.8" height="0.5" fill="#000000"/><rect x="724.1" y="248.2" width="0.8" height="1.5" fill="#000000"/><rect x="725.1" y="248.7" width="0.8" height="1.0" fill="#000000"/><rect x="726.1" y="248.7" width="0.8" height="1.0" fill="#000000"/><rect x="727.1" y="248.7" width="0.8" height="1.0" fill="#000000"/><rect x="728.1" y="248.7" width="0.8" height="1.0" fill="#000000"/><rect x="729.1" y="248.7" width="0.8" height="1.0" fill="#000000"/><rect x="730.1" y="248.2" width="0.8" height="1.5" fill="#000000"/><rect x="731.1" y="248.7" width="0.8" height="1.0" fill="#000000"/><rect x="732.1" y="248.7" width="0.8" height="1.3" fill="#000000"/><rect x="733.1" y="248.7" width="0.8" height="1.0" fill="#000000"/><rect x="735.1" y="248.9" width="0.8" height="0.6" fill="#000000"/><rect x="737.1" y="248.2" width="0.8" height="1.5" fill="#000000"/><rect x="738.1" y="248.2" width="0.8" height="1.5" fill="#000000"/><rect x="739.1" y="249.3" width="0.8" height="0.5" fill="#000000"/><rect x="724.1" y="250.2" width="0.8" height="1.5" fill="#000000"/><rect x="725.1" y="250.7" width="0.8" height="1.0" fill="#000000"/><rect x="726.1" y="250.7" width="0.8" height="1.3" fill="#000000"/><rect x="727.1" y="250.2" width="0.8" height="1.5" fill="#000000"/><rect x="728.1" y="250.7" width="0.8" height="1.0" fill="#000000"/><rect x="729.1" y="250.2" width="0.8" height="1.5" fill="#000000"/><rect x="730.1" y="250.7" width="0.8" height="1.0" fill="#000000"/><rect x="732.1" y="250.9" width="0.8" height="0.6" fill="#000000"/><rect x="734.1" y="250.2" width="0.8" height="1.5" fill="#000000"/><rect x="735.1" y="250.7" width="0.8" height="1.0" fill="#000000"/><rect x="736.1" y="250.2" width="0.8" height="1.5" fill="#000000"/><rect x="737.1" y="250.7" width="0.8" height="1.0" fill="#000000"/><rect x="738.1" y="250.7" width="0.8" height="1.0" fill="#000000"/><rect x="720.1" y="252.2" width="0.8" height="1.5" fill="#000000"/><rect x="716.1" y="254.2" width="0.8" height="1.5" fill="#000000"/><rect x="717.1" y="254.9" width="0.8" height="0.6" fill="#000000"/><rect x="712.1" y="256.2" width="0.8" height="1.5" fill="#000000"/></svg>
<div class="abs" style="left:776px;top:136px;width:1px;height:540px;background:#dcdcdc"></div>
<div class="abs" style="left:777px;top:136px;width:13px;height:2px;background:#3c3c3c"></div>

<div id="split"></div>

<!-- chart -->
<svg class="abs" style="left:0;top:0" width="1551" height="668">
  <text x="1009" y="139.7" font-family="Liberation Sans" font-size="16" fill="#424242">Break-up of Spain Electricity Production for 2008</text>
  <path d="M1146.77,315.63 L1146.77,192.63 A123,123 0 0 1 1267.59,292.58 Z" fill="#ff6358"/><path d="M1135.30,329.50 L1256.12,306.45 A123,123 0 0 1 1258.06,321.78 Z" fill="#ffe162"/><path d="M1135.30,329.50 L1258.06,321.78 A123,123 0 0 1 1013.27,344.92 Z" fill="#4cd180"/><path d="M1135.30,329.50 L1013.27,344.92 A123,123 0 0 1 1135.30,206.50 Z" fill="#4b5ffa"/>
  <g fill="none" stroke="#8c8c8c" stroke-width="1.7">
    <polyline points="1230.6,214.3 1217.4,184.4 1221,184.4"/>
    <polyline points="1265.8,313.2 1281.6,300.5 1285.2,300.5"/>
    <polyline points="1147.8,460.9 1149,471.7 1210,471.7"/>
    <polyline points="1037.1,242.9 1021.2,216.7 1017.2,216.7"/>
  </g>
  <g font-family="Liberation Sans" font-size="12" fill="#424242">
    <text x="1237" y="189.2">22</text>
    <text x="1300.5" y="305.3">2</text>
    <text x="1226" y="475.7">49</text>
    <text x="988.5" y="220.9">27</text>
  </g>
  <g font-family="Liberation Sans" font-size="14" fill="#424242">
    <rect x="1444" y="268" width="15" height="15" fill="#ff6358"/>
    <rect x="1444" y="290" width="15" height="15" fill="#ffe162"/>
    <rect x="1444" y="312" width="15" height="15" fill="#4cd180"/>
    <rect x="1444" y="334" width="15" height="15" fill="#4b5ffa"/>
    <text x="1466" y="280.7">Hydro</text>
    <text x="1466" y="302.7">Solar</text>
    <text x="1466" y="324.7">Nuclear</text>
    <text x="1466" y="346.7">Wind</text>
  </g>
</svg>
<div class="abs" style="left:1365px;top:232px;width:167px;height:159px;border:4px solid #ff0000;box-shadow:2px 2px 3px rgba(0,0,0,0.35), inset 2px 2px 3px rgba(0,0,0,0.35)"></div>

<!-- cursor -->
<svg class="abs" style="left:784px;top:606px" width="16" height="22" viewBox="0 0 16 22">
  <path d="M1.5,1.5 L1.5,17.5 L5.3,14 L8,20 L10.5,19 L8,13 L13,13 Z" fill="#fff" stroke="#1a1a1a" stroke-width="1" stroke-linejoin="round"/>
</svg>
</body></html>
